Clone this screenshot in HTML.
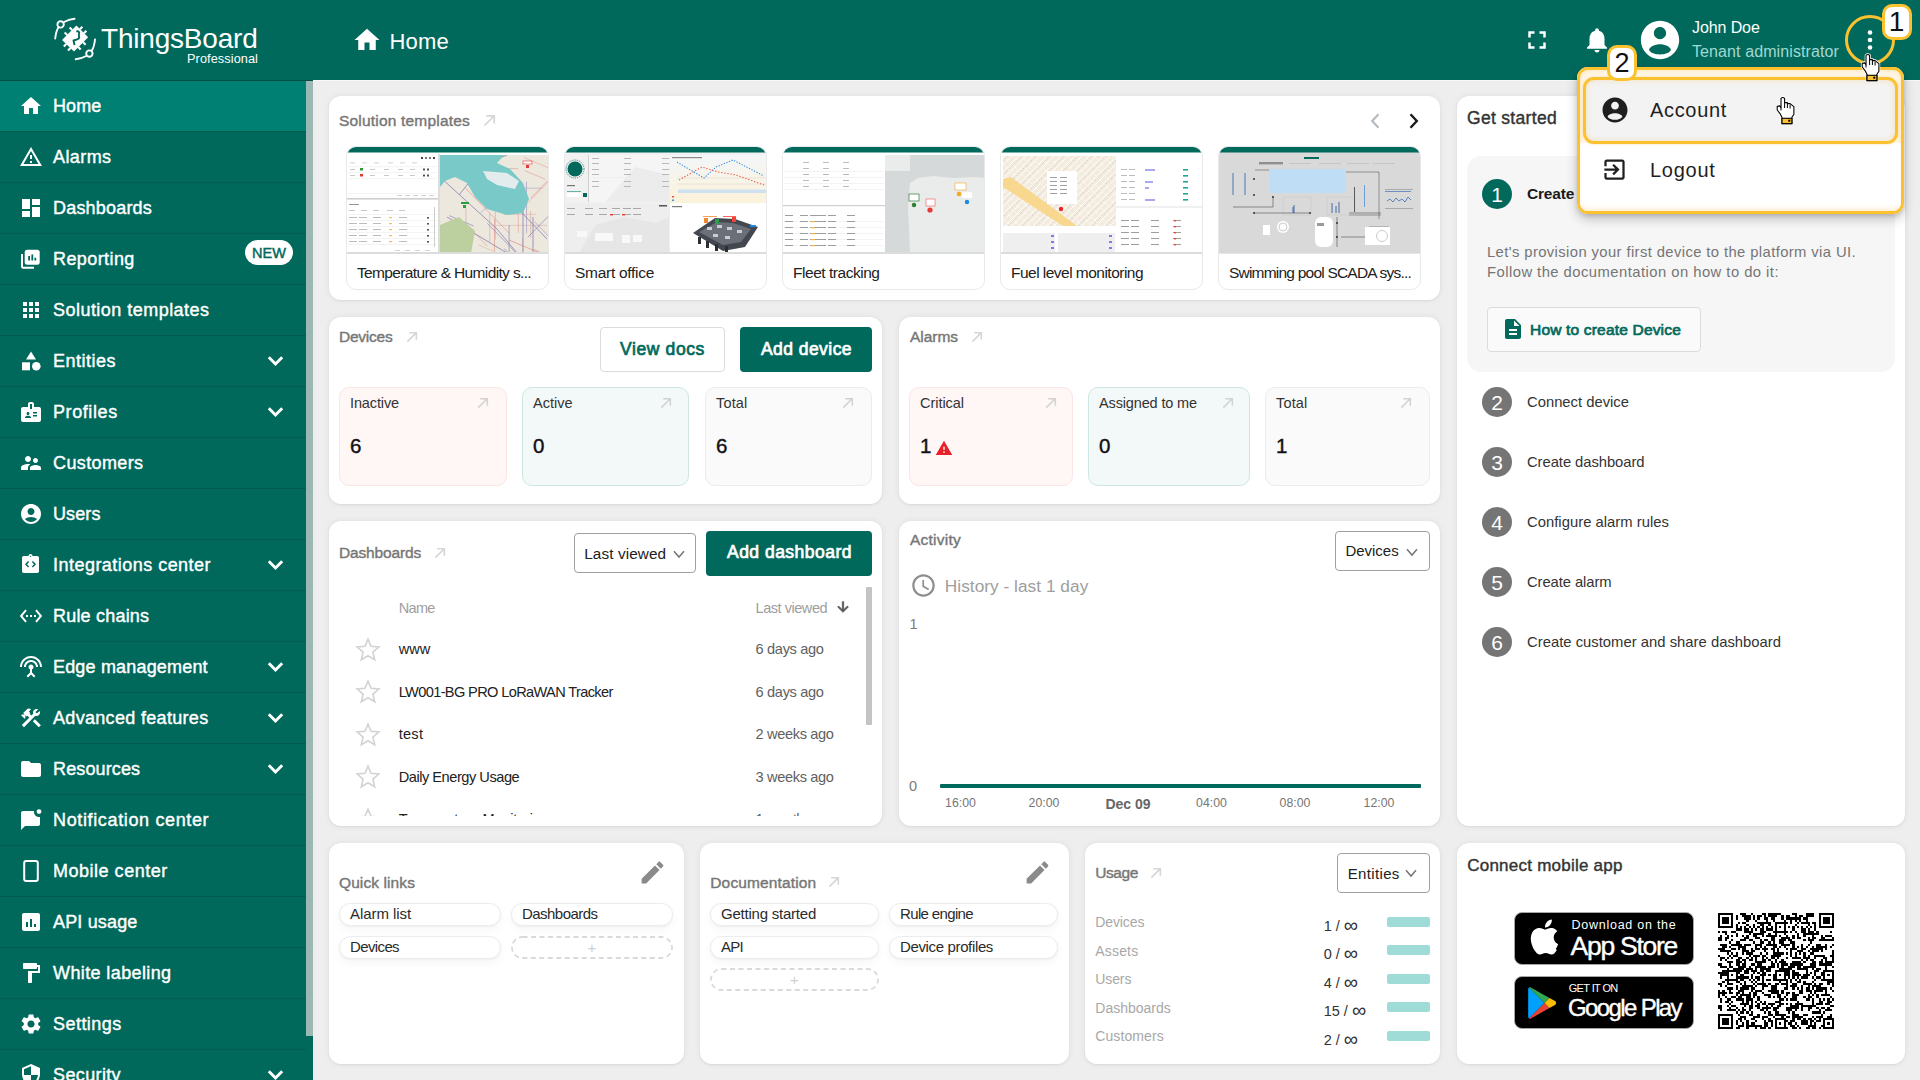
<!DOCTYPE html>
<html><head><meta charset="utf-8"><style>
*{box-sizing:border-box;margin:0;padding:0}
html,body{width:1920px;height:1080px;overflow:hidden}
body{font-family:"Liberation Sans",sans-serif;background:#eeeeee;position:relative;color:#212121}
.abs{position:absolute}
svg{display:block}
#hdr{left:0;top:0;width:1920px;height:80px;background:#00695c;z-index:5}
#side{left:0;top:80px;width:313px;height:1000px;background:#00695c;z-index:4;overflow:hidden}
.si{position:absolute;left:0;width:306px;height:51px;border-bottom:1px solid #005b50;color:#fff;font-weight:bold;font-size:17.5px}
.si .t{position:absolute;left:53px;top:15px;line-height:20px;white-space:nowrap}
.si svg.ic{position:absolute;left:19px;top:13px;width:24px;height:24px;fill:#fff}
.si svg.chev{position:absolute;left:259px;top:8px;width:32px;height:32px}
.si.act{background:#007f73}
.new{position:absolute;left:245px;top:5.5px;width:48px;height:25px;border-radius:13px;background:#fff;color:#00695c;font-size:14.5px;font-weight:normal;-webkit-text-stroke:0.45px #00695c;text-align:center;line-height:27px}
#sb{left:306px;top:0;width:7px;height:956px;background:#9bb8b5}
.card{position:absolute;background:#fff;border-radius:12px;box-shadow:0 0 6px rgba(0,0,0,.07),0 1px 2px rgba(0,0,0,.05)}
.ttl{position:absolute;font-size:15.5px;font-weight:bold;color:#6f6f6f;white-space:nowrap;line-height:18px}
.arr{position:absolute;width:14px;height:14px;fill:none;stroke:#cfcfcf;stroke-width:1.6}

.hico{position:absolute;fill:#fff}

.tpl{position:absolute;top:146px;width:203px;height:144px;border:1px solid #e9e9e9;border-radius:10px;overflow:hidden;background:#fff}
.tpl svg{position:absolute;left:0;top:0}

.btnO{position:absolute;border:1px solid #dcdcdc;border-radius:4px;background:#fff}
.btnF{position:absolute;border-radius:4px;background:#00695c}
.stat{position:absolute;border-radius:10px;border:1px solid}
.sel{position:absolute;border:1px solid #a0a0a0;border-radius:4px;background:#fff}

.chip{position:absolute;height:23px;border-radius:12px;border:1px solid #ececec;background:#fff;box-shadow:0 1px 2px rgba(0,0,0,.04),0 4px 10px rgba(0,0,0,.035)}
.chipd{position:absolute;height:23px;border-radius:12px;border:1.5px dashed #dedede;background:#fff}
.stepc{position:absolute;width:30px;height:30px;border-radius:50%;color:#fff;font-size:21px;text-align:center;line-height:31px}
.ubar{position:absolute;left:1387px;width:43px;height:10px;border-radius:2px;background:#9fdcd7}

.ybox{position:absolute;border:3px solid #fbc12e;border-radius:11px}
.badge{position:absolute;width:30px;height:36px;background:#fff;border:3px solid #fbc12e;border-radius:10px;color:#111;text-align:center}
</style></head><body>
<div id="hdr" class="abs"><svg class="abs" style="left:50px;top:14px;width:50px;height:50px" viewBox="0 0 50 50">
<g fill="none" stroke="#fff" stroke-width="1.9" stroke-linecap="round">
<path d="M5.2 24.5C5.8 19 7 15.5 8.5 13.2"/><path d="M14 8C17 6.3 20.5 5.2 24.5 4.8"/>
<circle cx="10.6" cy="10.4" r="3.2"/>
<path d="M45 25.5C44.4 31 43.3 34.5 41.7 36.8"/><path d="M36.2 42C33.2 43.7 29.7 44.8 25.7 45.2"/>
<circle cx="39.4" cy="39.6" r="3.2"/>
</g>
<g fill="none" stroke="#fff" stroke-width="2.1">
<path d="M17.2 21L14.6 18.5M22.1 16.1L19.6 13.5M29.9 15.2L32.4 12.7M33.9 19.2L36.4 16.7M33.1 28.2L35.6 30.7M28.2 33.1L30.7 35.6M20.5 34L18 36.5M16.3 30L13.8 32.5"/>
</g>
<path d="M26.4 11.6L38.2 23.2 24 37.6 12 26z" fill="#fff"/>
<path d="M26.3 17.6c2-.9 3.6.5 2.7 2.4-.7 1.4.6 2.4.1 3.9-.5 1.4-2.6 2-5.6 2.6l1 4.6" fill="none" stroke="#00695c" stroke-width="1.9" stroke-linejoin="round"/>
</svg><div class="abs" style="left:101px;top:23px;font-size:28px;color:#fff;line-height:32px;letter-spacing:-0.2px">ThingsBoard</div><div class="abs" style="left:187px;top:52px;font-size:12.7px;color:#fff;line-height:14px;letter-spacing:0.1px">Professional</div><svg class="hico" style="left:352px;top:25px;width:30px;height:30px" viewBox="0 0 24 24"><path d="M10 20v-6h4v6h5v-8h3L12 3 2 12h3v8z"/></svg><div class="abs" style="left:389.5px;top:31.38px;font-size:22px;color:#fff;line-height:1;white-space:nowrap;letter-spacing:0.203px;">Home</div><svg class="hico" style="left:1522px;top:25px;width:30px;height:30px" viewBox="0 0 24 24"><path d="M7 14H5v5h5v-2H7v-3zm-2-4h2V7h3V5H5v5zm12 7h-3v2h5v-5h-2v3zM14 5v2h3v3h2V5h-5z"/></svg><svg class="hico" style="left:1582px;top:25px;width:30px;height:30px" viewBox="0 0 24 24"><path d="M12 22c1.1 0 2-.9 2-2h-4c0 1.1.89 2 2 2zm6-6v-5c0-3.07-1.64-5.64-4.5-6.32V4c0-.83-.67-1.5-1.5-1.5s-1.5.67-1.5 1.5v.68C7.63 5.36 6 7.92 6 11v5l-2 2v1h16v-1l-2-2z"/></svg><svg class="hico" style="left:1637px;top:17px;width:46px;height:46px" viewBox="0 0 24 24"><path d="M12 2C6.48 2 2 6.48 2 12s4.48 10 10 10 10-4.48 10-10S17.52 2 12 2zm0 3.2c1.77 0 3.2 1.43 3.2 3.2S13.77 11.6 12 11.6 8.8 10.17 8.8 8.4 10.23 5.2 12 5.2zm0 14.3c-2.6 0-4.9-.8-5.7-2.3.1-1.8 3.3-3 5.7-3s5.6 1.2 5.7 3c-.8 1.5-3.1 2.3-5.7 2.3z"/></svg><div class="abs" style="left:1692px;top:19px;font-size:16px;color:#fff;line-height:18px;letter-spacing:-0.1px">John Doe</div><div class="abs" style="left:1692px;top:43px;font-size:16px;color:#a3d8cf;line-height:18px;letter-spacing:0.1px">Tenant administrator</div><svg class="hico" style="left:1860px;top:25px;width:20px;height:30px" viewBox="0 0 20 30"><circle cx="10" cy="7.5" r="2.3"/><circle cx="10" cy="15" r="2.3"/><circle cx="10" cy="22.5" r="2.3"/></svg></div>
<div id="side" class="abs">
<div class="si act" style="top:1px"><svg class="ic" viewBox="0 0 24 24"><path d="M10 20v-6h4v6h5v-8h3L12 3 2 12h3v8z"/></svg><div class="abs" style="left:53px;top:15.96px;font-size:18px;color:#fff;line-height:1;white-space:nowrap;-webkit-text-stroke:0.4px currentColor;font-weight:normal;letter-spacing:0.121px;">Home</div></div>
<div class="si" style="top:52px"><svg class="ic" viewBox="0 0 24 24"><path d="M12 5.99L19.53 19H4.47L12 5.99M12 2L1 21h22L12 2zm1 14h-2v2h2v-2zm0-6h-2v4h2v-4z"/></svg><div class="abs" style="left:53px;top:15.96px;font-size:18px;color:#fff;line-height:1;white-space:nowrap;-webkit-text-stroke:0.4px currentColor;font-weight:normal;letter-spacing:0.414px;">Alarms</div></div>
<div class="si" style="top:103px"><svg class="ic" viewBox="0 0 24 24"><path d="M3 13h8V3H3v10zm0 8h8v-6H3v6zm10 0h8V11h-8v10zm0-18v6h8V3h-8z"/></svg><div class="abs" style="left:53px;top:15.96px;font-size:18px;color:#fff;line-height:1;white-space:nowrap;-webkit-text-stroke:0.4px currentColor;font-weight:normal;letter-spacing:0.194px;">Dashboards</div></div>
<div class="si" style="top:154px"><svg class="ic" viewBox="0 0 24 24"><rect x="5.7" y="2.8" width="15" height="15" rx="2.5"/><path d="M2 7h2v12.7h11v2H4.2A2.2 2.2 0 0 1 2 19.5z"/><path d="M9.2 13.5h1.8V9H9.2zM12.4 13.5h1.8V7.5h-1.8zM15.4 13.5h1.8v-2.8h-1.8z" fill="#00695c"/></svg><div class="abs" style="left:53px;top:15.96px;font-size:18px;color:#fff;line-height:1;white-space:nowrap;-webkit-text-stroke:0.4px currentColor;font-weight:normal;letter-spacing:0.411px;">Reporting</div><span class="new">NEW</span></div>
<div class="si" style="top:205px"><svg class="ic" viewBox="0 0 24 24"><path d="M4 8h4V4H4v4zm6 12h4v-4h-4v4zm-6 0h4v-4H4v4zm0-6h4v-4H4v4zm6 0h4v-4h-4v4zm6-10v4h4V4h-4zm-6 4h4V4h-4v4zm6 6h4v-4h-4v4zm0 6h4v-4h-4v4z"/></svg><div class="abs" style="left:53px;top:15.96px;font-size:18px;color:#fff;line-height:1;white-space:nowrap;-webkit-text-stroke:0.4px currentColor;font-weight:normal;letter-spacing:0.467px;">Solution templates</div></div>
<div class="si" style="top:256px"><svg class="ic" viewBox="0 0 24 24"><path d="M12 2.5l-5 8h10z"/><circle cx="17.3" cy="17.3" r="4.3"/><rect x="3" y="13.3" width="8" height="8"/></svg><div class="abs" style="left:53px;top:15.96px;font-size:18px;color:#fff;line-height:1;white-space:nowrap;-webkit-text-stroke:0.4px currentColor;font-weight:normal;letter-spacing:0.496px;">Entities</div><svg class="chev" viewBox="259 8 32 32"><path d="M268.8 21.3L275.5 28L282.2 21.3" fill="none" stroke="#fff" stroke-width="2.9"/></svg></div>
<div class="si" style="top:307px"><svg class="ic" viewBox="0 0 24 24"><path d="M20 7h-5V4c0-1.1-.9-2-2-2h-2c-1.1 0-2 .9-2 2v3H4c-1.1 0-2 .9-2 2v11c0 1.1.9 2 2 2h16c1.1 0 2-.9 2-2V9c0-1.1-.9-2-2-2zM9 12c.83 0 1.5.67 1.5 1.5S9.83 15 9 15s-1.5-.67-1.5-1.5S8.17 12 9 12zm3 6H6v-.43c0-.6.36-1.15.92-1.39.64-.28 1.34-.43 2.08-.43s1.44.15 2.08.43c.55.24.92.78.92 1.39V18zm1-9h-2V4h2v5zm5 7.5h-4V15h4v1.5zm0-3h-4V12h4v1.5z"/></svg><div class="abs" style="left:53px;top:15.96px;font-size:18px;color:#fff;line-height:1;white-space:nowrap;-webkit-text-stroke:0.4px currentColor;font-weight:normal;letter-spacing:0.590px;">Profiles</div><svg class="chev" viewBox="259 8 32 32"><path d="M268.8 21.3L275.5 28L282.2 21.3" fill="none" stroke="#fff" stroke-width="2.9"/></svg></div>
<div class="si" style="top:358px"><svg class="ic" viewBox="0 0 24 24"><path d="M16.5 12c1.38 0 2.49-1.12 2.49-2.5S17.88 7 16.5 7C15.12 7 14 8.12 14 9.5s1.12 2.5 2.5 2.5zM9 11c1.66 0 2.99-1.34 2.99-3S10.66 5 9 5C7.34 5 6 6.34 6 8s1.34 3 3 3zm7.5 3c-1.83 0-5.5.92-5.5 2.75V19h11v-2.25c0-1.83-3.67-2.75-5.5-2.75zM9 13c-2.33 0-7 1.17-7 3.5V19h7v-2.25c0-.85.33-2.34 2.37-3.47C10.5 13.1 9.66 13 9 13z"/></svg><div class="abs" style="left:53px;top:15.96px;font-size:18px;color:#fff;line-height:1;white-space:nowrap;-webkit-text-stroke:0.4px currentColor;font-weight:normal;letter-spacing:0.385px;">Customers</div></div>
<div class="si" style="top:409px"><svg class="ic" viewBox="0 0 24 24"><path d="M12 2C6.48 2 2 6.48 2 12s4.48 10 10 10 10-4.48 10-10S17.52 2 12 2zm0 4c1.93 0 3.5 1.57 3.5 3.5S13.93 13 12 13s-3.5-1.57-3.5-3.5S10.07 6 12 6zm0 14c-2.03 0-4.43-.82-6.14-2.88C7.55 15.8 9.68 15 12 15s4.45.8 6.14 2.12C16.43 19.18 14.03 20 12 20z"/></svg><div class="abs" style="left:53px;top:15.96px;font-size:18px;color:#fff;line-height:1;white-space:nowrap;-webkit-text-stroke:0.4px currentColor;font-weight:normal;letter-spacing:0.097px;">Users</div></div>
<div class="si" style="top:460px"><svg class="ic" viewBox="0 0 24 24"><path d="M4.7 3h4.8a2 2 0 0 1 4 0h4.8A1.7 1.7 0 0 1 20 4.7v13.6A1.7 1.7 0 0 1 18.3 20H4.7A1.7 1.7 0 0 1 3 18.3V4.7A1.7 1.7 0 0 1 4.7 3z"/><circle cx="11.5" cy="3.3" r=".6" fill="#00695c"/><path d="M9.6 8.6l-2.6 2.7 2.6 2.7M13.4 8.6l2.6 2.7-2.6 2.7" fill="none" stroke="#00695c" stroke-width="1.5"/></svg><div class="abs" style="left:53px;top:15.96px;font-size:18px;color:#fff;line-height:1;white-space:nowrap;-webkit-text-stroke:0.4px currentColor;font-weight:normal;letter-spacing:0.469px;">Integrations center</div><svg class="chev" viewBox="259 8 32 32"><path d="M268.8 21.3L275.5 28L282.2 21.3" fill="none" stroke="#fff" stroke-width="2.9"/></svg></div>
<div class="si" style="top:511px"><svg class="ic" viewBox="0 0 24 24"><path d="M7.77 6.76L6.23 5.48.82 12l5.41 6.52 1.54-1.28L3.42 12l4.35-5.24zM7 13h2v-2H7v2zm10-2h-2v2h2v-2zm-6 2h2v-2h-2v2zm6.77-7.52l-1.54 1.28L20.58 12l-4.35 5.24 1.54 1.28L23.18 12l-5.41-6.52z"/></svg><div class="abs" style="left:53px;top:15.96px;font-size:18px;color:#fff;line-height:1;white-space:nowrap;-webkit-text-stroke:0.4px currentColor;font-weight:normal;letter-spacing:0.199px;">Rule chains</div></div>
<div class="si" style="top:562px"><svg class="ic" viewBox="0 0 24 24"><path d="M12 5c-3.87 0-7 3.13-7 7h2c0-2.76 2.24-5 5-5s5 2.24 5 5h2c0-3.87-3.13-7-7-7zm1 9.29c.88-.39 1.5-1.26 1.5-2.29 0-1.38-1.12-2.5-2.5-2.5S9.5 10.62 9.5 12c0 1.02.62 1.9 1.5 2.29v3.3L7.59 21 9 22.41l3-3 3 3L16.41 21 13 17.59v-3.3zM12 1C5.93 1 1 5.93 1 12h2c0-4.97 4.03-9 9-9s9 4.03 9 9h2c0-6.07-4.93-11-11-11z"/></svg><div class="abs" style="left:53px;top:15.96px;font-size:18px;color:#fff;line-height:1;white-space:nowrap;-webkit-text-stroke:0.4px currentColor;font-weight:normal;letter-spacing:0.176px;">Edge management</div><svg class="chev" viewBox="259 8 32 32"><path d="M268.8 21.3L275.5 28L282.2 21.3" fill="none" stroke="#fff" stroke-width="2.9"/></svg></div>
<div class="si" style="top:613px"><svg class="ic" viewBox="0 0 24 24"><path d="M13.78 15.3l6 6 2.11-2.16-6-6-2.11 2.16zM17.5 10c1.93 0 3.5-1.57 3.5-3.5 0-.58-.16-1.12-.41-1.6l-2.7 2.7-1.49-1.49 2.7-2.7c-.48-.25-1.02-.41-1.6-.41C15.57 3 14 4.57 14 6.5c0 .41.08.8.21 1.16l-1.85 1.85-1.78-1.78.71-.71-1.41-1.41L12 3.49c-1.17-1.17-3.07-1.17-4.24 0L4.22 7.03l1.41 1.41H2.81l-.71.71 3.54 3.54.71-.71V9.15l1.41 1.41.71-.71 1.78 1.78-7.41 7.41 2.12 2.12L16.34 9.79c.36.13.75.21 1.16.21z"/></svg><div class="abs" style="left:53px;top:15.96px;font-size:18px;color:#fff;line-height:1;white-space:nowrap;-webkit-text-stroke:0.4px currentColor;font-weight:normal;letter-spacing:0.317px;">Advanced features</div><svg class="chev" viewBox="259 8 32 32"><path d="M268.8 21.3L275.5 28L282.2 21.3" fill="none" stroke="#fff" stroke-width="2.9"/></svg></div>
<div class="si" style="top:664px"><svg class="ic" viewBox="0 0 24 24"><path d="M10 4H4c-1.1 0-1.99.9-1.99 2L2 18c0 1.1.9 2 2 2h16c1.1 0 2-.9 2-2V8c0-1.1-.9-2-2-2h-8l-2-2z"/></svg><div class="abs" style="left:53px;top:15.96px;font-size:18px;color:#fff;line-height:1;white-space:nowrap;-webkit-text-stroke:0.4px currentColor;font-weight:normal;letter-spacing:0.134px;">Resources</div><svg class="chev" viewBox="259 8 32 32"><path d="M268.8 21.3L275.5 28L282.2 21.3" fill="none" stroke="#fff" stroke-width="2.9"/></svg></div>
<div class="si" style="top:715px"><svg class="ic" viewBox="0 0 24 24"><path d="M21 7.6V16c0 1.1-.9 2-2 2H6l-4 4V5c0-1.1.9-2 2-2h11.1c-.06.32-.1.66-.1 1 0 2.76 2.24 5 5 5 .35 0 .69-.04 1-.1z"/><circle cx="20" cy="3.6" r="2.4"/></svg><div class="abs" style="left:53px;top:15.96px;font-size:18px;color:#fff;line-height:1;white-space:nowrap;-webkit-text-stroke:0.4px currentColor;font-weight:normal;letter-spacing:0.641px;">Notification center</div></div>
<div class="si" style="top:766px"><svg class="ic" viewBox="0 0 24 24"><rect x="5.2" y="2" width="13.6" height="20" rx="2" fill="none" stroke="#fff" stroke-width="2"/></svg><div class="abs" style="left:53px;top:15.96px;font-size:18px;color:#fff;line-height:1;white-space:nowrap;-webkit-text-stroke:0.4px currentColor;font-weight:normal;letter-spacing:0.514px;">Mobile center</div></div>
<div class="si" style="top:817px"><svg class="ic" viewBox="0 0 24 24"><path d="M19 3H5c-1.1 0-2 .9-2 2v14c0 1.1.9 2 2 2h14c1.1 0 2-.9 2-2V5c0-1.1-.9-2-2-2zM9 17H7v-5h2v5zm4 0h-2V9h2v8zm4 0h-2v-3h2v3z"/></svg><div class="abs" style="left:53px;top:15.96px;font-size:18px;color:#fff;line-height:1;white-space:nowrap;-webkit-text-stroke:0.4px currentColor;font-weight:normal;letter-spacing:0.160px;">API usage</div></div>
<div class="si" style="top:868px"><svg class="ic" viewBox="0 0 24 24"><path d="M18 4V3c0-.55-.45-1-1-1H5c-.55 0-1 .45-1 1v4c0 .55.45 1 1 1h12c.55 0 1-.45 1-1V6h1v4H9v11c0 .55.45 1 1 1h2c.55 0 1-.45 1-1v-9h8V4h-3z"/></svg><div class="abs" style="left:53px;top:15.96px;font-size:18px;color:#fff;line-height:1;white-space:nowrap;-webkit-text-stroke:0.4px currentColor;font-weight:normal;letter-spacing:0.388px;">White labeling</div></div>
<div class="si" style="top:919px"><svg class="ic" viewBox="0 0 24 24"><path d="M19.14 12.94c.04-.3.06-.61.06-.94 0-.32-.02-.64-.07-.94l2.03-1.58c.18-.14.23-.41.12-.61l-1.92-3.32c-.12-.22-.37-.29-.59-.22l-2.39.96c-.5-.38-1.03-.7-1.62-.94l-.36-2.54c-.04-.24-.24-.41-.48-.41h-3.84c-.24 0-.43.17-.47.41l-.36 2.54c-.59.24-1.13.57-1.62.94l-2.39-.96c-.22-.08-.47 0-.59.22L2.74 8.87c-.12.21-.08.47.12.61l2.03 1.58c-.05.3-.09.63-.09.94s.02.64.07.94l-2.03 1.58c-.18.14-.23.41-.12.61l1.92 3.32c.12.22.37.29.59.22l2.39-.96c.5.38 1.03.7 1.62.94l.36 2.54c.05.24.24.41.48.41h3.84c.24 0 .44-.17.47-.41l.36-2.54c.59-.24 1.13-.56 1.62-.94l2.39.96c.22.08.47 0 .59-.22l1.92-3.32c.12-.22.07-.47-.12-.61l-2.01-1.58zM12 15.6c-1.98 0-3.6-1.62-3.6-3.6s1.62-3.6 3.6-3.6 3.6 1.62 3.6 3.6-1.62 3.6-3.6 3.6z"/></svg><div class="abs" style="left:53px;top:15.96px;font-size:18px;color:#fff;line-height:1;white-space:nowrap;-webkit-text-stroke:0.4px currentColor;font-weight:normal;letter-spacing:0.463px;">Settings</div></div>
<div class="si" style="top:970px"><svg class="ic" viewBox="0 0 24 24"><path d="M12 1L3 5v6c0 5.55 3.84 10.74 9 12 5.16-1.26 9-6.45 9-12V5l-9-4zm0 10.99h7c-.53 4.12-3.28 7.79-7 8.94V12H5V6.3l7-3.11v8.8z"/></svg><div class="abs" style="left:53px;top:15.96px;font-size:18px;color:#fff;line-height:1;white-space:nowrap;-webkit-text-stroke:0.4px currentColor;font-weight:normal;letter-spacing:0.371px;">Security</div><svg class="chev" viewBox="259 8 32 32"><path d="M268.8 21.3L275.5 28L282.2 21.3" fill="none" stroke="#fff" stroke-width="2.9"/></svg></div>
<div id="sb" class="abs"></div>
<div class="abs" style="left:0;top:0;width:313px;height:1px;background:#004f45"></div>
</div>
<div class="abs" style="left:313px;top:80px;width:1607px;height:1px;background:#f7f7f7"></div>
<div class="card" style="left:329px;top:96px;width:1111px;height:204px"></div>
<div class="card" style="left:1457px;top:96px;width:448px;height:730px"></div>
<div class="card" style="left:329px;top:317px;width:553px;height:187px"></div>
<div class="card" style="left:899px;top:317px;width:541px;height:187px"></div>
<div class="card" style="left:329px;top:521px;width:553px;height:305px"></div>
<div class="card" style="left:899px;top:521px;width:541px;height:305px"></div>
<div class="card" style="left:329px;top:843px;width:355px;height:221px"></div>
<div class="card" style="left:700px;top:843px;width:369px;height:221px"></div>
<div class="card" style="left:1085px;top:843px;width:355px;height:221px"></div>
<div class="card" style="left:1457px;top:843px;width:448px;height:221px"></div>
<div class="abs" style="left:339px;top:113.18px;font-size:15.5px;color:#767676;line-height:1;white-space:nowrap;-webkit-text-stroke:0.4px currentColor;font-weight:normal;letter-spacing:0.193px;">Solution templates</div><svg class="abs" style="left:483px;top:114px;width:13px;height:13px" viewBox="0 0 13 13"><path d="M1.5 11.5L11 2M3.5 1.8H11.2V9.5" fill="none" stroke="#d6d6d6" stroke-width="1.7"/></svg><svg class="abs" style="left:1364px;top:109px;width:20px;height:24px" viewBox="0 0 20 24"><path d="M14.5 5.2L8.2 12l6.3 6.8" fill="none" stroke="#b4bcc3" stroke-width="2.2"/></svg><svg class="abs" style="left:1404px;top:109px;width:20px;height:24px" viewBox="0 0 20 24"><path d="M6.5 5.2L12.8 12l-6.3 6.8" fill="none" stroke="#1b1b1b" stroke-width="2.4"/></svg><div class="tpl" style="left:346px"><svg width="203" height="107" viewBox="0 0 203 107"><rect width="202" height="107" fill="#fff"/>
<rect x="0" y="0" width="203" height="5.5" fill="#00695c"/>
<rect x="1" y="19.5" width="89" height="0.6" fill="#ececec"/><rect x="1" y="25.5" width="89" height="0.6" fill="#ececec"/><rect x="1" y="31.5" width="89" height="0.6" fill="#ececec"/><rect x="1" y="46" width="89" height="0.6" fill="#ececec"/><rect x="3" y="15.5" width="5" height="0.8" fill="#c9c9c9"/><rect x="15" y="15.5" width="5" height="0.8" fill="#c9c9c9"/><rect x="27" y="15.5" width="5" height="0.8" fill="#c9c9c9"/><rect x="41" y="15.5" width="5" height="0.8" fill="#c9c9c9"/><rect x="53" y="15.5" width="5" height="0.8" fill="#c9c9c9"/><rect x="65" y="15.5" width="5" height="0.8" fill="#c9c9c9"/><rect x="3" y="22" width="5" height="0.8" fill="#bdbdbd"/><rect x="23" y="22" width="5" height="0.8" fill="#bdbdbd"/><rect x="37" y="22" width="5" height="0.8" fill="#bdbdbd"/><rect x="51" y="22" width="5" height="0.8" fill="#bdbdbd"/><rect x="63" y="22" width="5" height="0.8" fill="#bdbdbd"/><rect x="3" y="28" width="5" height="0.8" fill="#bdbdbd"/><rect x="23" y="28" width="5" height="0.8" fill="#bdbdbd"/><rect x="37" y="28" width="5" height="0.8" fill="#bdbdbd"/><rect x="51" y="28" width="5" height="0.8" fill="#bdbdbd"/><rect x="63" y="28" width="5" height="0.8" fill="#bdbdbd"/>
<rect x="74" y="10" width="2" height="2" fill="#444"/><rect x="78" y="10" width="2" height="2" fill="#777"/><rect x="82" y="10" width="2" height="2" fill="#777"/><rect x="86" y="10" width="2" height="2" fill="#444"/>
<rect x="13" y="21" width="3" height="2.5" fill="#2a9d3a"/><rect x="13" y="27" width="3" height="2.5" fill="#e53935"/>
<rect x="76" y="21.5" width="2" height="2" fill="#555"/><rect x="80" y="21.5" width="2" height="2" fill="#555"/><rect x="76" y="27.5" width="2" height="2" fill="#555"/><rect x="80" y="27.5" width="2" height="2" fill="#555"/>
<rect x="50" y="48" width="5" height="0.8" fill="#c9c9c9"/><rect x="58" y="48" width="5" height="0.8" fill="#c9c9c9"/><rect x="66" y="48" width="5" height="0.8" fill="#c9c9c9"/><rect x="74" y="48" width="5" height="0.8" fill="#c9c9c9"/><rect x="82" y="48" width="5" height="0.8" fill="#c9c9c9"/>
<rect x="0" y="51" width="92" height="1.6" fill="#cfcfcf"/>
<rect x="2" y="57" width="10" height="1" fill="#999"/><rect x="2" y="63" width="6" height="0.8" fill="#bbb"/><rect x="14" y="63" width="6" height="0.8" fill="#bbb"/><rect x="26" y="63" width="6" height="0.8" fill="#bbb"/><rect x="40" y="63" width="6" height="0.8" fill="#bbb"/><rect x="52" y="63" width="6" height="0.8" fill="#bbb"/>
<rect x="1" y="67" width="89" height="0.6" fill="#ececec"/><rect x="1" y="73" width="89" height="0.6" fill="#ececec"/><rect x="1" y="79" width="89" height="0.6" fill="#ececec"/><rect x="1" y="85" width="89" height="0.6" fill="#ececec"/><rect x="1" y="91" width="89" height="0.6" fill="#ececec"/><rect x="1" y="97" width="89" height="0.6" fill="#ececec"/><rect x="2" y="70" width="8" height="0.9" fill="#b5b5b5"/><rect x="12" y="70" width="8" height="0.9" fill="#b5b5b5"/><rect x="26" y="70" width="8" height="0.9" fill="#b5b5b5"/><rect x="52" y="70" width="8" height="0.9" fill="#b5b5b5"/><rect x="2" y="76" width="8" height="0.9" fill="#b5b5b5"/><rect x="12" y="76" width="8" height="0.9" fill="#b5b5b5"/><rect x="26" y="76" width="8" height="0.9" fill="#b5b5b5"/><rect x="52" y="76" width="8" height="0.9" fill="#b5b5b5"/><rect x="2" y="82" width="8" height="0.9" fill="#b5b5b5"/><rect x="12" y="82" width="8" height="0.9" fill="#b5b5b5"/><rect x="26" y="82" width="8" height="0.9" fill="#b5b5b5"/><rect x="52" y="82" width="8" height="0.9" fill="#b5b5b5"/><rect x="2" y="88" width="8" height="0.9" fill="#b5b5b5"/><rect x="12" y="88" width="8" height="0.9" fill="#b5b5b5"/><rect x="26" y="88" width="8" height="0.9" fill="#b5b5b5"/><rect x="52" y="88" width="8" height="0.9" fill="#b5b5b5"/><rect x="2" y="94" width="8" height="0.9" fill="#b5b5b5"/><rect x="12" y="94" width="8" height="0.9" fill="#b5b5b5"/><rect x="26" y="94" width="8" height="0.9" fill="#b5b5b5"/><rect x="52" y="94" width="8" height="0.9" fill="#b5b5b5"/>
<rect x="42" y="70" width="3" height="1.2" fill="#f6c04a"/><rect x="42" y="76" width="3" height="1.2" fill="#f6c04a"/><rect x="42" y="82" width="3" height="1.2" fill="#f6c04a"/><rect x="42" y="88" width="3" height="1.2" fill="#f6c04a"/><rect x="42" y="94" width="3" height="1.2" fill="#f6c04a"/><rect x="80" y="70" width="2" height="1.6" fill="#555"/><rect x="80" y="76" width="2" height="1.6" fill="#555"/><rect x="80" y="82" width="2" height="1.6" fill="#555"/><rect x="80" y="88" width="2" height="1.6" fill="#555"/><rect x="80" y="94" width="2" height="1.6" fill="#555"/>
<rect x="87" y="60" width="1" height="40" fill="#ccc"/><rect x="48" y="103" width="5" height="0.8" fill="#c9c9c9"/><rect x="58" y="103" width="5" height="0.8" fill="#c9c9c9"/><rect x="68" y="103" width="5" height="0.8" fill="#c9c9c9"/><rect x="78" y="103" width="5" height="0.8" fill="#c9c9c9"/>
<rect x="91" y="7" width="2" height="100" fill="#dddddd"/>
<rect x="93" y="8" width="109" height="98" fill="#ece8dd"/>
<svg x="93" y="8" width="109" height="98" viewBox="93 8 109 98" overflow="hidden"><g fill="none"><path d="M118.9 61.3L119.0 127.1" stroke="#d9b4a8" stroke-width="0.8"/><path d="M156.3 67.3L189.3 67.3" stroke="#e6a59b" stroke-width="0.5"/><path d="M201.5 54.1L241.9 71.1" stroke="#e6a59b" stroke-width="0.5"/><path d="M162.2 93.1L198.6 108.4" stroke="#e29a90" stroke-width="0.8"/><path d="M177.7 23.6L198.1 32.2" stroke="#e29a90" stroke-width="0.6"/><path d="M144.5 78.4L200.2 78.4" stroke="#d9b4a8" stroke-width="0.6"/><path d="M172.4 64.5L216.9 18.7" stroke="#e29a90" stroke-width="0.5"/><path d="M107.8 29.3L146.3 13.0" stroke="#9d8fbf" stroke-width="0.6"/><path d="M148.3 45.8L148.3 92.5" stroke="#d9b4a8" stroke-width="0.8"/><path d="M118.3 41.0L162.1 86.1" stroke="#e6a59b" stroke-width="0.8"/><path d="M186.8 102.5L231.4 121.4" stroke="#e6a59b" stroke-width="0.8"/><path d="M183.6 64.2L183.7 90.4" stroke="#d9b4a8" stroke-width="0.8"/><path d="M200.9 16.7L229.1 45.7" stroke="#e6a59b" stroke-width="0.5"/><path d="M125.0 83.3L140.5 99.3" stroke="#e29a90" stroke-width="0.6"/><path d="M171.3 40.4L171.3 85.7" stroke="#e29a90" stroke-width="0.6"/><path d="M93.8 18.6L113.7 27.0" stroke="#e6a59b" stroke-width="0.6"/><path d="M124.8 33.8L145.2 25.2" stroke="#9d8fbf" stroke-width="0.6"/><path d="M132.3 21.6L171.1 21.6" stroke="#d9b4a8" stroke-width="0.8"/><path d="M187.5 74.7L223.0 111.3" stroke="#9d8fbf" stroke-width="0.6"/><path d="M162.1 78.1L162.2 120.0" stroke="#9d8fbf" stroke-width="0.8"/><path d="M126.0 41.2L195.4 41.2" stroke="#9d8fbf" stroke-width="0.5"/><path d="M134.0 65.7L150.1 49.2" stroke="#9d8fbf" stroke-width="0.6"/><path d="M131.5 97.9L182.4 119.5" stroke="#d9b4a8" stroke-width="0.5"/><path d="M157.2 101.6L204.7 150.5" stroke="#9d8fbf" stroke-width="0.8"/><path d="M142.7 66.1L142.8 95.0" stroke="#e6a59b" stroke-width="0.6"/><path d="M175.6 90.7L175.7 125.7" stroke="#d9b4a8" stroke-width="0.5"/><path d="M177.2 10.6L227.1 31.7" stroke="#e6a59b" stroke-width="0.6"/><path d="M147.5 72.1L147.5 104.0" stroke="#e6a59b" stroke-width="0.8"/><path d="M140.4 76.4L175.3 112.3" stroke="#9d8fbf" stroke-width="0.8"/><path d="M183.9 51.0L200.6 33.8" stroke="#e6a59b" stroke-width="0.8"/><path d="M142.2 30.1L157.3 45.6" stroke="#e6a59b" stroke-width="0.6"/><path d="M180.9 90.2L225.0 44.8" stroke="#9d8fbf" stroke-width="0.8"/><path d="M102.3 68.7L126.7 79.0" stroke="#9d8fbf" stroke-width="0.8"/><path d="M179.5 34.6L179.6 86.3" stroke="#9d8fbf" stroke-width="0.6"/></g><g stroke="#8c7fb0" stroke-width="0.8" fill="none"><path d="M93 30L150 82L170 106M112 48L136 18L160 8M100 70L160 106M150 40L200 92M176 106V60M186 106V70"/></g></svg><path d="M93 8H157L150 16L163 22L176 36L182 52L176 66L160 68L140 62L128 50L120 36L108 30L98 34L93 40Z" fill="#78c9c8"/>
<path d="M136 24L160 26L172 34L168 42L150 38L140 32Z" fill="#e3ecec"/>
<path d="M93 78L112 70L128 84L124 106H93Z" fill="#bccf9f"/>
<rect x="176" y="14" width="9" height="3" fill="#fff" stroke="#e53935" stroke-width=".6"/><rect x="179" y="18" width="3" height="3" fill="#e53935"/>
<rect x="114" y="55" width="8" height="2" fill="#2a9d3a"/><rect x="116" y="58" width="3" height="3" fill="#2a9d3a"/>
<rect x="0" y="105" width="202" height="2" fill="#dcdcdc"/></svg></div><div class="abs" style="left:357px;top:265.48px;font-size:15.5px;color:#212121;line-height:1;white-space:nowrap;letter-spacing:-0.638px;">Temperature &amp; Humidity s...</div><div class="tpl" style="left:564px"><svg width="203" height="107" viewBox="0 0 203 107"><defs><linearGradient id="sky" x1="0" y1="0" x2="0" y2="1"><stop offset="0" stop-color="#f3f6f9"/><stop offset="1" stop-color="#fbf2da"/></linearGradient></defs>
<rect width="203" height="107" fill="#f1f1f1"/>
<rect x="0" y="0" width="203" height="5.5" fill="#00695c"/>
<rect x="24" y="8" width="80" height="47" fill="#f5f5f5"/>
<path d="M40 55L70 20L104 28V55Z" fill="#ececec"/>
<rect x="26" y="30.5" width="76" height="0.6" fill="#ececec"/><rect x="27" y="11" width="7" height="1" fill="#b9b9b9"/><rect x="59" y="11" width="7" height="1" fill="#b9b9b9"/><rect x="97" y="11" width="7" height="1" fill="#b9b9b9"/><rect x="27" y="16" width="7" height="1" fill="#b9b9b9"/><rect x="59" y="16" width="7" height="1" fill="#b9b9b9"/><rect x="97" y="16" width="7" height="1" fill="#b9b9b9"/><rect x="27" y="22" width="7" height="1" fill="#b9b9b9"/><rect x="59" y="22" width="7" height="1" fill="#b9b9b9"/><rect x="97" y="22" width="7" height="1" fill="#b9b9b9"/><rect x="27" y="27" width="7" height="1" fill="#b9b9b9"/><rect x="59" y="27" width="7" height="1" fill="#b9b9b9"/><rect x="97" y="27" width="7" height="1" fill="#b9b9b9"/><rect x="27" y="34" width="7" height="1" fill="#b9b9b9"/><rect x="59" y="34" width="7" height="1" fill="#b9b9b9"/><rect x="97" y="34" width="7" height="1" fill="#b9b9b9"/><rect x="27" y="39" width="7" height="1" fill="#b9b9b9"/><rect x="59" y="39" width="7" height="1" fill="#b9b9b9"/><rect x="97" y="39" width="7" height="1" fill="#b9b9b9"/>
<circle cx="10" cy="22" r="7.5" fill="#00695c"/><circle cx="10" cy="22" r="9" fill="none" stroke="#00695c" stroke-width=".9" stroke-dasharray="1 1.2"/>
<rect x="2" y="38" width="8" height="1.2" fill="#777"/><rect x="2" y="44" width="14" height="1" fill="#6ab0a8"/><rect x="2" y="46" width="14" height="4" fill="#fff"/><rect x="18" y="46" width="4" height="4" fill="#00695c"/>
<rect x="23" y="8" width="1" height="47" fill="#cfcfcf"/>
<rect x="0" y="56" width="105" height="51" fill="#eeeeee"/>
<path d="M14 107L30 78L60 70L90 76L104 70V107Z" fill="#e6e6e6"/><rect x="12" y="84" width="10" height="6" fill="#f8f8f8"/><rect x="30" y="86" width="18" height="8" fill="#f8f8f8"/><rect x="57" y="88" width="8" height="8" fill="#f8f8f8"/><rect x="68" y="88" width="9" height="7" fill="#f8f8f8"/>
<rect x="2" y="61" width="8" height="1" fill="#a9a9a9"/><rect x="20" y="61" width="8" height="1" fill="#a9a9a9"/><rect x="34" y="61" width="8" height="1" fill="#a9a9a9"/><rect x="47" y="61" width="8" height="1" fill="#a9a9a9"/><rect x="58" y="61" width="8" height="1" fill="#a9a9a9"/><rect x="68" y="61" width="8" height="1" fill="#a9a9a9"/><rect x="2" y="67" width="8" height="1" fill="#a9a9a9"/><rect x="20" y="67" width="8" height="1" fill="#a9a9a9"/><rect x="34" y="67" width="8" height="1" fill="#a9a9a9"/><rect x="47" y="67" width="8" height="1" fill="#a9a9a9"/><rect x="58" y="67" width="8" height="1" fill="#a9a9a9"/><rect x="68" y="67" width="8" height="1" fill="#a9a9a9"/><rect x="94" y="58" width="8" height="1.5" fill="#555"/>
<rect x="45" y="67" width="3" height="1.4" fill="#e53935"/><rect x="57" y="67" width="3" height="1.4" fill="#e53935"/>
<rect x="105" y="8" width="98" height="48" fill="url(#sky)"/>
<rect x="107" y="10" width="30" height="1.2" fill="#8a8a8a"/>
<g stroke="#e2d6bf" stroke-width=".5"><path d="M112 31H201M112 37H201"/></g>
<polyline points="112,15 139,31 151,20 168,13 199,29" fill="none" stroke="#3a8ee0" stroke-width="1.1" stroke-dasharray="1.3 1.5"/>
<polyline points="114,33 137,20 153,25 171,28 199,38" fill="none" stroke="#f05440" stroke-width="1.1" stroke-dasharray="1.3 1.8"/>
<rect x="113" y="42.5" width="88" height="3.5" fill="#cfe0f1"/>
<rect x="107" y="49" width="2" height="1.5" fill="#f05440"/><rect x="107" y="52.5" width="2" height="1.5" fill="#3a8ee0"/>
<rect x="105" y="56" width="98" height="51" fill="#ffffff"/><rect x="107" y="59" width="10" height="1.2" fill="#777"/>
<path d="M128 86L150 71L170 72L193 80L180 100L158 104Z" fill="#43474f"/>
<path d="M134 85L152 75L168 76L186 82L176 95L158 98Z" fill="#6b6f78"/>
<g fill="#c9ccd2"><rect x="142" y="80" width="5" height="3"/><rect x="152" y="78" width="5" height="3"/><rect x="162" y="80" width="5" height="3"/><rect x="172" y="83" width="5" height="3"/><rect x="148" y="87" width="5" height="3"/><rect x="160" y="89" width="5" height="3"/></g>
<g fill="#2b2e34"><rect x="133" y="90" width="3" height="7"/><rect x="141" y="94" width="3" height="7"/><rect x="150" y="97" width="3" height="7"/><rect x="160" y="99" width="3" height="6"/></g>
<rect x="139" y="71" width="4" height="5" fill="#f08a30"/><rect x="150" y="72" width="4" height="5" fill="#2e9d4e"/><rect x="167" y="70" width="4" height="5" fill="#f44336"/><rect x="185" y="78" width="6" height="2" fill="#1e88e5"/>
<rect x="138" y="69" width="14" height=".8" fill="#f08a30"/><rect x="158" y="69" width="13" height=".8" fill="#f44336"/>
<rect x="0" y="105" width="203" height="2" fill="#dcdcdc"/></svg></div><div class="abs" style="left:575px;top:265.48px;font-size:15.5px;color:#212121;line-height:1;white-space:nowrap;letter-spacing:-0.285px;">Smart office</div><div class="tpl" style="left:782px"><svg width="203" height="107" viewBox="0 0 203 107"><rect width="202" height="107" fill="#fff"/>
<rect x="0" y="0" width="203" height="5.5" fill="#00695c"/>
<rect x="1" y="24" width="100" height="0.6" fill="#ececec"/><rect x="1" y="30" width="100" height="0.6" fill="#ececec"/><rect x="1" y="36" width="100" height="0.6" fill="#ececec"/><rect x="1" y="42" width="100" height="0.6" fill="#ececec"/><rect x="20" y="15" width="6" height="1" fill="#bdbdbd"/><rect x="40" y="15" width="6" height="1" fill="#bdbdbd"/><rect x="60" y="15" width="6" height="1" fill="#bdbdbd"/><rect x="20" y="21" width="6" height="1" fill="#bdbdbd"/><rect x="40" y="21" width="6" height="1" fill="#bdbdbd"/><rect x="60" y="21" width="6" height="1" fill="#bdbdbd"/><rect x="20" y="27" width="6" height="1" fill="#bdbdbd"/><rect x="40" y="27" width="6" height="1" fill="#bdbdbd"/><rect x="60" y="27" width="6" height="1" fill="#bdbdbd"/><rect x="20" y="33" width="6" height="1" fill="#bdbdbd"/><rect x="40" y="33" width="6" height="1" fill="#bdbdbd"/><rect x="60" y="33" width="6" height="1" fill="#bdbdbd"/><rect x="20" y="39" width="6" height="1" fill="#bdbdbd"/><rect x="40" y="39" width="6" height="1" fill="#bdbdbd"/><rect x="60" y="39" width="6" height="1" fill="#bdbdbd"/>
<rect x="0" y="58" width="102" height="1.2" fill="#cfcfcf"/>
<rect x="1" y="74" width="99" height="0.6" fill="#ececec"/><rect x="1" y="80" width="99" height="0.6" fill="#ececec"/><rect x="1" y="86" width="99" height="0.6" fill="#ececec"/><rect x="1" y="92" width="99" height="0.6" fill="#ececec"/><rect x="1" y="98" width="99" height="0.6" fill="#ececec"/><rect x="2" y="68" width="8" height="1" fill="#9e9e9e"/><rect x="17" y="68" width="8" height="1" fill="#9e9e9e"/><rect x="27" y="68" width="8" height="1" fill="#9e9e9e"/><rect x="35" y="68" width="8" height="1" fill="#9e9e9e"/><rect x="45" y="68" width="8" height="1" fill="#9e9e9e"/><rect x="64" y="68" width="8" height="1" fill="#9e9e9e"/><rect x="2" y="74" width="8" height="1" fill="#9e9e9e"/><rect x="17" y="74" width="8" height="1" fill="#9e9e9e"/><rect x="27" y="74" width="8" height="1" fill="#9e9e9e"/><rect x="35" y="74" width="8" height="1" fill="#9e9e9e"/><rect x="45" y="74" width="8" height="1" fill="#9e9e9e"/><rect x="64" y="74" width="8" height="1" fill="#9e9e9e"/><rect x="2" y="80" width="8" height="1" fill="#9e9e9e"/><rect x="17" y="80" width="8" height="1" fill="#9e9e9e"/><rect x="27" y="80" width="8" height="1" fill="#9e9e9e"/><rect x="35" y="80" width="8" height="1" fill="#9e9e9e"/><rect x="45" y="80" width="8" height="1" fill="#9e9e9e"/><rect x="64" y="80" width="8" height="1" fill="#9e9e9e"/><rect x="2" y="86" width="8" height="1" fill="#9e9e9e"/><rect x="17" y="86" width="8" height="1" fill="#9e9e9e"/><rect x="27" y="86" width="8" height="1" fill="#9e9e9e"/><rect x="35" y="86" width="8" height="1" fill="#9e9e9e"/><rect x="45" y="86" width="8" height="1" fill="#9e9e9e"/><rect x="64" y="86" width="8" height="1" fill="#9e9e9e"/><rect x="2" y="92" width="8" height="1" fill="#9e9e9e"/><rect x="17" y="92" width="8" height="1" fill="#9e9e9e"/><rect x="27" y="92" width="8" height="1" fill="#9e9e9e"/><rect x="35" y="92" width="8" height="1" fill="#9e9e9e"/><rect x="45" y="92" width="8" height="1" fill="#9e9e9e"/><rect x="64" y="92" width="8" height="1" fill="#9e9e9e"/><rect x="2" y="98" width="8" height="1" fill="#9e9e9e"/><rect x="17" y="98" width="8" height="1" fill="#9e9e9e"/><rect x="27" y="98" width="8" height="1" fill="#9e9e9e"/><rect x="35" y="98" width="8" height="1" fill="#9e9e9e"/><rect x="45" y="98" width="8" height="1" fill="#9e9e9e"/><rect x="64" y="98" width="8" height="1" fill="#9e9e9e"/>
<rect x="28" y="74" width="4" height="1.2" fill="#f0b44a"/><rect x="28" y="80" width="4" height="1.2" fill="#f0b44a"/><rect x="28" y="86" width="4" height="1.2" fill="#f0b44a"/><rect x="28" y="92" width="4" height="1.2" fill="#f0b44a"/><rect x="28" y="98" width="4" height="1.2" fill="#f0b44a"/>
<rect x="102" y="8" width="101" height="98" fill="#eaeceb"/>
<path d="M102 24H127V8H203V31L190 30L170 31L150 29L135 31L127 36L125 60L127 106H102Z" fill="#d5d9da"/>
<rect x="126" y="47" width="10" height="7" fill="#fff" stroke="#2e7d32" stroke-width=".7"/><circle cx="131" cy="58" r="2.2" fill="#2e7d32"/>
<rect x="143" y="52" width="9" height="7" fill="#fff" stroke="#e53935" stroke-width=".5"/><circle cx="147" cy="63" r="2.6" fill="#e53935"/>
<rect x="172" y="36" width="11" height="7" fill="#fff" stroke="#f5a623" stroke-width=".6"/><circle cx="176" cy="47" r="2.3" fill="#f5a623"/>
<rect x="179" y="45" width="10" height="6" fill="#fff"/><circle cx="184" cy="55" r="2.2" fill="#1e88e5"/>
<rect x="0" y="105" width="202" height="2" fill="#dcdcdc"/></svg></div><div class="abs" style="left:793px;top:265.48px;font-size:15.5px;color:#212121;line-height:1;white-space:nowrap;letter-spacing:-0.468px;">Fleet tracking</div><div class="tpl" style="left:1000px"><svg width="203" height="107" viewBox="0 0 203 107"><rect width="202" height="107" fill="#fff"/>
<rect x="0" y="0" width="203" height="5.5" fill="#00695c"/>
<rect x="2" y="9" width="113" height="70" fill="#f3ecde"/>
<svg x="2" y="9" width="113" height="70" viewBox="2 9 113 70" overflow="hidden"><g fill="none"><path d="M-80 79L-10 9M-73 79L-3 9M-66 79L4 9M-59 79L11 9M-52 79L18 9M-45 79L25 9M-38 79L32 9M-31 79L39 9M-24 79L46 9M-17 79L53 9M-10 79L60 9M-3 79L67 9M4 79L74 9M11 79L81 9M18 79L88 9M25 79L95 9M32 79L102 9M39 79L109 9M46 79L116 9M53 79L123 9M60 79L130 9M67 79L137 9M74 79L144 9M81 79L151 9M88 79L158 9M95 79L165 9M102 79L172 9M109 79L179 9M116 79L186 9" stroke="#ffffff" stroke-width=".9"/><path d="M-60 9L10 79M-51 9L19 79M-42 9L28 79M-33 9L37 79M-24 9L46 79M-15 9L55 79M-6 9L64 79M3 9L73 79M12 9L82 79M21 9L91 79M30 9L100 79M39 9L109 79M48 9L118 79M57 9L127 79M66 9L136 79M75 9L145 79M84 9L154 79M93 9L163 79M102 9L172 79M111 9L181 79M120 9L190 79M129 9L199 79M138 9L208 79" stroke="#fbf7ee" stroke-width=".7"/><path d="M-77 79L-7 9M-63 79L7 9M-49 79L21 9M-35 79L35 9M-21 79L49 9M-7 79L63 9M7 79L77 9M21 79L91 9M35 79L105 9M49 79L119 9M63 79L133 9M77 79L147 9M91 79L161 9M105 79L175 9M119 79L189 9" stroke="#9aa2b0" stroke-width=".35" stroke-dasharray="2 1.5"/></g></svg><path d="M2 32L10 30L76 79H62L2 40Z" fill="#f8d88f"/>
<rect x="46" y="24" width="30" height="33" fill="#fff"/><rect x="49" y="30" width="7" height="1" fill="#9e9e9e"/><rect x="59" y="30" width="7" height="1" fill="#9e9e9e"/><rect x="49" y="34" width="7" height="1" fill="#9e9e9e"/><rect x="59" y="34" width="7" height="1" fill="#9e9e9e"/><rect x="49" y="38" width="7" height="1" fill="#9e9e9e"/><rect x="59" y="38" width="7" height="1" fill="#9e9e9e"/><rect x="49" y="42" width="7" height="1" fill="#9e9e9e"/><rect x="59" y="42" width="7" height="1" fill="#9e9e9e"/><rect x="49" y="46" width="7" height="1" fill="#9e9e9e"/><rect x="59" y="46" width="7" height="1" fill="#9e9e9e"/>
<circle cx="60" cy="62" r="2.2" fill="#f02525"/>
<rect x="2" y="80" width="113" height="4" fill="#fff"/>
<rect x="2" y="86" width="52" height="19" fill="#efefef"/><rect x="57" y="86" width="57" height="19" fill="#efefef"/>
<rect x="50" y="88" width="3" height="2" fill="#7c7ce8"/><rect x="50" y="94" width="3" height="2" fill="#7c7ce8"/><rect x="50" y="100" width="3" height="2" fill="#7c7ce8"/><rect x="108" y="88" width="3" height="2" fill="#7c7ce8"/><rect x="108" y="94" width="3" height="2" fill="#7c7ce8"/><rect x="108" y="100" width="3" height="2" fill="#7c7ce8"/>
<rect x="115" y="8" width="87" height="51" fill="#fff"/>
<rect x="120" y="22" width="6" height="1" fill="#bdbdbd"/><rect x="128" y="22" width="6" height="1" fill="#bdbdbd"/><rect x="120" y="28" width="6" height="1" fill="#bdbdbd"/><rect x="128" y="28" width="6" height="1" fill="#bdbdbd"/><rect x="120" y="34" width="6" height="1" fill="#bdbdbd"/><rect x="128" y="34" width="6" height="1" fill="#bdbdbd"/><rect x="120" y="40" width="6" height="1" fill="#bdbdbd"/><rect x="128" y="40" width="6" height="1" fill="#bdbdbd"/><rect x="120" y="46" width="6" height="1" fill="#bdbdbd"/><rect x="128" y="46" width="6" height="1" fill="#bdbdbd"/><rect x="120" y="52" width="6" height="1" fill="#bdbdbd"/><rect x="128" y="52" width="6" height="1" fill="#bdbdbd"/>
<rect x="144" y="22" width="10" height="2" fill="#a9a9f0"/><rect x="144" y="34" width="8" height="2" fill="#a9a9f0"/><rect x="144" y="40" width="4" height="2" fill="#a9a9f0"/><rect x="144" y="52" width="10" height="2" fill="#a9a9f0"/>
<rect x="182" y="22" width="5" height="1.6" fill="#26a69a"/><rect x="182" y="28" width="5" height="1.6" fill="#26a69a"/><rect x="182" y="34" width="5" height="1.6" fill="#26a69a"/><rect x="182" y="40" width="5" height="1.6" fill="#26a69a"/><rect x="182" y="46" width="5" height="1.6" fill="#26a69a"/><rect x="182" y="52" width="5" height="1.6" fill="#26a69a"/>
<rect x="115" y="59" width="87" height="2" fill="#f0f0f0"/>
<rect x="120" y="73" width="8" height="1" fill="#9e9e9e"/><rect x="130" y="73" width="8" height="1" fill="#9e9e9e"/><rect x="150" y="73" width="8" height="1" fill="#9e9e9e"/><rect x="172" y="73" width="8" height="1" fill="#9e9e9e"/><rect x="120" y="79" width="8" height="1" fill="#9e9e9e"/><rect x="130" y="79" width="8" height="1" fill="#9e9e9e"/><rect x="150" y="79" width="8" height="1" fill="#9e9e9e"/><rect x="172" y="79" width="8" height="1" fill="#9e9e9e"/><rect x="120" y="85" width="8" height="1" fill="#9e9e9e"/><rect x="130" y="85" width="8" height="1" fill="#9e9e9e"/><rect x="150" y="85" width="8" height="1" fill="#9e9e9e"/><rect x="172" y="85" width="8" height="1" fill="#9e9e9e"/><rect x="120" y="91" width="8" height="1" fill="#9e9e9e"/><rect x="130" y="91" width="8" height="1" fill="#9e9e9e"/><rect x="150" y="91" width="8" height="1" fill="#9e9e9e"/><rect x="172" y="91" width="8" height="1" fill="#9e9e9e"/><rect x="120" y="97" width="8" height="1" fill="#9e9e9e"/><rect x="130" y="97" width="8" height="1" fill="#9e9e9e"/><rect x="150" y="97" width="8" height="1" fill="#9e9e9e"/><rect x="172" y="97" width="8" height="1" fill="#9e9e9e"/><rect x="173" y="73" width="2" height="1.4" fill="#f44336"/><rect x="173" y="79" width="2" height="1.4" fill="#f44336"/><rect x="173" y="85" width="2" height="1.4" fill="#f44336"/><rect x="173" y="91" width="2" height="1.4" fill="#f44336"/><rect x="173" y="97" width="2" height="1.4" fill="#f44336"/>
<rect x="0" y="105" width="202" height="2" fill="#dcdcdc"/></svg></div><div class="abs" style="left:1011px;top:265.48px;font-size:15.5px;color:#212121;line-height:1;white-space:nowrap;letter-spacing:-0.525px;">Fuel level monitoring</div><div class="tpl" style="left:1218px"><svg width="203" height="107" viewBox="0 0 203 107"><rect width="202" height="107" fill="#d9d9d9"/>
<rect x="0" y="0" width="203" height="5.5" fill="#00695c"/>
<rect x="85" y="10" width="15" height="2" fill="#00695c"/>
<rect x="40" y="15" width="24" height="2.4" fill="#8f8f8f"/><rect x="70" y="16" width="22" height="0.6" fill="#b8b8b8"/><rect x="100" y="16" width="22" height="0.6" fill="#b8b8b8"/><rect x="128" y="16" width="22" height="0.6" fill="#b8b8b8"/><rect x="154" y="16" width="22" height="0.6" fill="#b8b8b8"/>
<rect x="50" y="22" width="76" height="24" fill="#bfddf4"/>
<g stroke="#5a5a5a" stroke-width=".6" fill="none"><path d="M36 23H50M127 25H160V72M14 26V48M26 26V48M130 68H162M150 80H170"/></g>
<rect x="64" y="50" width="28" height="18" fill="none" stroke="#c6c6c6" stroke-width=".5"/><rect x="108" y="50" width="28" height="18" fill="none" stroke="#c6c6c6" stroke-width=".5"/>
<rect x="96" y="70" width="18" height="30" rx="6" fill="#fff"/><rect x="98" y="76" width="7" height="3" fill="#9a9a9a"/>
<circle cx="64" cy="80" r="6" fill="#fff"/><rect x="44" y="78" width="7" height="10" fill="#fff"/>
<rect x="146" y="80" width="25" height="18" fill="#fff"/><circle cx="163" cy="89" r="5.5" fill="none" stroke="#aaa" stroke-width=".6"/>
<rect x="135" y="40" width="1" height="25" fill="#5a5a5a"/>
<rect x="166" y="44" width="26" height="1" fill="#6a8fc0"/><rect x="166" y="42" width="28" height="1" fill="#aaa"/><rect x="166" y="61" width="28" height="1" fill="#aaa"/>
<rect x="13.5" y="26" width="1" height="22" fill="#6a9fd8"/><rect x="25.5" y="26" width="1" height="22" fill="#6a9fd8"/>
<g fill="#222"><circle cx="35" cy="32" r=".9"/><circle cx="35" cy="48" r=".9"/><circle cx="54" cy="50" r=".9"/><circle cx="35" cy="66" r=".9"/><circle cx="91" cy="66" r=".9"/><circle cx="118" cy="76" r=".9"/><circle cx="118" cy="90" r=".9"/></g>
<g stroke="#333" stroke-width=".5" fill="none"><path d="M14 60H54M54 50V60M35 66H90M118 70V100M122 90H146M130 66H162"/></g>
<path d="M74 66V60M75 66V58" stroke="#1f4fa0" stroke-width=".8"/><path d="M113 66V56M117 66V59M120 66V55" stroke="#1f4fa0" stroke-width=".8"/>
<polyline points="168,54 171,52 174,55 177,51 180,54 183,52 186,55 189,50 192,53" fill="none" stroke="#2a5fae" stroke-width=".7"/>
<rect x="145" y="38" width="1" height="22" fill="#6a9fd8"/><rect x="60" y="76" width="8" height="8" rx="4" fill="none" stroke="#999" stroke-width=".5"/>
<rect x="0" y="106" width="202" height="1" fill="#e6e6e6"/></svg></div><div class="abs" style="left:1229px;top:265.48px;font-size:15.5px;color:#212121;line-height:1;white-space:nowrap;letter-spacing:-0.786px;">Swimming pool SCADA sys...</div>
<div class="abs" style="left:339px;top:328.88px;font-size:15.5px;color:#767676;line-height:1;white-space:nowrap;-webkit-text-stroke:0.4px currentColor;font-weight:normal;letter-spacing:-0.249px;">Devices</div><svg class="abs" style="left:406px;top:331px;width:12px;height:12px" viewBox="0 0 13 13"><path d="M1.5 11.5L11 2M3.5 1.8H11.2V9.5" fill="none" stroke="#d6d6d6" stroke-width="1.7"/></svg><div class="btnO" style="left:600px;top:327px;width:125px;height:45px"></div><div class="abs" style="left:620px;top:340.69px;font-size:17.5px;color:#00695c;line-height:1;white-space:nowrap;-webkit-text-stroke:0.7px currentColor;font-weight:normal;letter-spacing:0.616px;">View docs</div><div class="btnF" style="left:740px;top:327px;width:132px;height:45px"></div><div class="abs" style="left:761px;top:340.69px;font-size:17.5px;color:#ffffff;line-height:1;white-space:nowrap;-webkit-text-stroke:0.7px currentColor;font-weight:normal;letter-spacing:0.441px;">Add device</div><div class="stat" style="left:339px;top:387px;width:168px;height:99px;background:#fff6f6;border-color:#fbe5e5"></div><div class="abs" style="left:350px;top:395.73px;font-size:14.5px;color:#333333;line-height:1;white-space:nowrap;letter-spacing:-0.123px;">Inactive</div><div class="abs" style="left:350px;top:435.65px;font-size:20.5px;color:#111111;line-height:1;white-space:nowrap;-webkit-text-stroke:0.4px currentColor;font-weight:normal;">6</div><svg class="abs" style="left:477px;top:397px;width:12px;height:12px" viewBox="0 0 13 13"><path d="M1.5 11.5L11 2M3.5 1.8H11.2V9.5" fill="none" stroke="#d2d2d2" stroke-width="1.6"/></svg><div class="stat" style="left:522px;top:387px;width:167px;height:99px;background:#f3f8f8;border-color:#cfe6e3"></div><div class="abs" style="left:533px;top:395.73px;font-size:14.5px;color:#333333;line-height:1;white-space:nowrap;letter-spacing:0.000px;">Active</div><div class="abs" style="left:533px;top:435.65px;font-size:20.5px;color:#111111;line-height:1;white-space:nowrap;-webkit-text-stroke:0.4px currentColor;font-weight:normal;">0</div><svg class="abs" style="left:660px;top:397px;width:12px;height:12px" viewBox="0 0 13 13"><path d="M1.5 11.5L11 2M3.5 1.8H11.2V9.5" fill="none" stroke="#d2d2d2" stroke-width="1.6"/></svg><div class="stat" style="left:705px;top:387px;width:167px;height:99px;background:#fafafa;border-color:#ececec"></div><div class="abs" style="left:716px;top:395.73px;font-size:14.5px;color:#333333;line-height:1;white-space:nowrap;letter-spacing:0.172px;">Total</div><div class="abs" style="left:716px;top:435.65px;font-size:20.5px;color:#111111;line-height:1;white-space:nowrap;-webkit-text-stroke:0.4px currentColor;font-weight:normal;">6</div><svg class="abs" style="left:842px;top:397px;width:12px;height:12px" viewBox="0 0 13 13"><path d="M1.5 11.5L11 2M3.5 1.8H11.2V9.5" fill="none" stroke="#d2d2d2" stroke-width="1.6"/></svg><div class="abs" style="left:910px;top:328.88px;font-size:15.5px;color:#767676;line-height:1;white-space:nowrap;-webkit-text-stroke:0.4px currentColor;font-weight:normal;letter-spacing:-0.039px;">Alarms</div><svg class="abs" style="left:971px;top:331px;width:12px;height:12px" viewBox="0 0 13 13"><path d="M1.5 11.5L11 2M3.5 1.8H11.2V9.5" fill="none" stroke="#d6d6d6" stroke-width="1.7"/></svg><div class="stat" style="left:909px;top:387px;width:164px;height:99px;background:#fff6f6;border-color:#fbe5e5"></div><div class="abs" style="left:920px;top:395.73px;font-size:14.5px;color:#333333;line-height:1;white-space:nowrap;letter-spacing:-0.039px;">Critical</div><div class="abs" style="left:920px;top:435.65px;font-size:20.5px;color:#111111;line-height:1;white-space:nowrap;-webkit-text-stroke:0.4px currentColor;font-weight:normal;">1</div><svg class="abs" style="left:1045px;top:397px;width:12px;height:12px" viewBox="0 0 13 13"><path d="M1.5 11.5L11 2M3.5 1.8H11.2V9.5" fill="none" stroke="#d2d2d2" stroke-width="1.6"/></svg><svg class="abs" style="left:935px;top:439px;width:18px;height:16px" viewBox="0 0 24 21"><path d="M1 21h22L12 2 1 21zm12-3h-2v-2h2v2zm0-4h-2v-4h2v4z" fill="#e8202a"/></svg><div class="stat" style="left:1088px;top:387px;width:162px;height:99px;background:#f3f8f8;border-color:#cfe6e3"></div><div class="abs" style="left:1099px;top:395.73px;font-size:14.5px;color:#333333;line-height:1;white-space:nowrap;letter-spacing:-0.140px;">Assigned to me</div><div class="abs" style="left:1099px;top:435.65px;font-size:20.5px;color:#111111;line-height:1;white-space:nowrap;-webkit-text-stroke:0.4px currentColor;font-weight:normal;">0</div><svg class="abs" style="left:1222px;top:397px;width:12px;height:12px" viewBox="0 0 13 13"><path d="M1.5 11.5L11 2M3.5 1.8H11.2V9.5" fill="none" stroke="#d2d2d2" stroke-width="1.6"/></svg><div class="stat" style="left:1265px;top:387px;width:165px;height:99px;background:#fafafa;border-color:#ececec"></div><div class="abs" style="left:1276px;top:395.73px;font-size:14.5px;color:#333333;line-height:1;white-space:nowrap;letter-spacing:0.172px;">Total</div><div class="abs" style="left:1276px;top:435.65px;font-size:20.5px;color:#111111;line-height:1;white-space:nowrap;-webkit-text-stroke:0.4px currentColor;font-weight:normal;">1</div><svg class="abs" style="left:1400px;top:397px;width:12px;height:12px" viewBox="0 0 13 13"><path d="M1.5 11.5L11 2M3.5 1.8H11.2V9.5" fill="none" stroke="#d2d2d2" stroke-width="1.6"/></svg><div class="abs" style="left:339px;top:544.88px;font-size:15.5px;color:#767676;line-height:1;white-space:nowrap;-webkit-text-stroke:0.4px currentColor;font-weight:normal;letter-spacing:-0.158px;">Dashboards</div><svg class="abs" style="left:434px;top:547px;width:12px;height:12px" viewBox="0 0 13 13"><path d="M1.5 11.5L11 2M3.5 1.8H11.2V9.5" fill="none" stroke="#d6d6d6" stroke-width="1.7"/></svg><div class="sel" style="left:574px;top:533px;width:122px;height:40px"></div><div class="abs" style="left:584.2px;top:545.55px;font-size:15.3px;color:#212121;line-height:1;white-space:nowrap;letter-spacing:0.111px;">Last viewed</div><svg class="abs" style="left:673px;top:550px;width:12px;height:9px" viewBox="0 0 12 9"><path d="M1 1.2L6.0 7L11 1.2" fill="none" stroke="#757575" stroke-width="1.5"/></svg><div class="btnF" style="left:706px;top:531px;width:166px;height:45px"></div><div class="abs" style="left:727px;top:544.19px;font-size:17.5px;color:#ffffff;line-height:1;white-space:nowrap;-webkit-text-stroke:0.7px currentColor;font-weight:normal;letter-spacing:0.483px;">Add dashboard</div><div class="abs" style="left:398.7px;top:601.03px;font-size:14.5px;color:#9e9e9e;line-height:1;white-space:nowrap;letter-spacing:-0.672px;">Name</div><div class="abs" style="left:755.6px;top:601.03px;font-size:14.5px;color:#9e9e9e;line-height:1;white-space:nowrap;letter-spacing:-0.462px;">Last viewed</div><svg class="abs" style="left:835px;top:599px;width:16px;height:16px" viewBox="0 0 24 24"><path d="M20 12l-1.41-1.41L13 16.17V4h-2v12.17l-5.58-5.59L4 12l8 8 8-8z" fill="#555" stroke="#555" stroke-width="1.2"/></svg><div class="abs" style="left:329px;top:580px;width:536px;height:236px;overflow:hidden"><svg class="abs" style="left:26px;top:56.6px;width:26px;height:26px" viewBox="0 0 24 24"><path d="M12 17.27L18.18 21l-1.64-7.03L22 9.24l-7.19-.61L12 2 9.19 8.63 2 9.24l5.46 4.73L5.82 21z" fill="none" stroke="#d3d3d3" stroke-width="1.5"/></svg><div class="abs" style="left:69.7px;top:62.24px;font-size:14.6px;color:#212121;line-height:1;white-space:nowrap;letter-spacing:-0.042px;">www</div><div class="abs" style="left:426.6px;top:62.24px;font-size:14.6px;color:#616161;line-height:1;white-space:nowrap;letter-spacing:-0.341px;">6 days ago</div><svg class="abs" style="left:26px;top:99.1px;width:26px;height:26px" viewBox="0 0 24 24"><path d="M12 17.27L18.18 21l-1.64-7.03L22 9.24l-7.19-.61L12 2 9.19 8.63 2 9.24l5.46 4.73L5.82 21z" fill="none" stroke="#d3d3d3" stroke-width="1.5"/></svg><div class="abs" style="left:69.7px;top:104.74px;font-size:14.6px;color:#212121;line-height:1;white-space:nowrap;letter-spacing:-0.641px;">LW001-BG PRO LoRaWAN Tracker</div><div class="abs" style="left:426.6px;top:104.74px;font-size:14.6px;color:#616161;line-height:1;white-space:nowrap;letter-spacing:-0.341px;">6 days ago</div><svg class="abs" style="left:26px;top:141.6px;width:26px;height:26px" viewBox="0 0 24 24"><path d="M12 17.27L18.18 21l-1.64-7.03L22 9.24l-7.19-.61L12 2 9.19 8.63 2 9.24l5.46 4.73L5.82 21z" fill="none" stroke="#d3d3d3" stroke-width="1.5"/></svg><div class="abs" style="left:69.7px;top:147.24px;font-size:14.6px;color:#212121;line-height:1;white-space:nowrap;letter-spacing:0.242px;">test</div><div class="abs" style="left:426.6px;top:147.24px;font-size:14.6px;color:#616161;line-height:1;white-space:nowrap;letter-spacing:-0.359px;">2 weeks ago</div><svg class="abs" style="left:26px;top:184.1px;width:26px;height:26px" viewBox="0 0 24 24"><path d="M12 17.27L18.18 21l-1.64-7.03L22 9.24l-7.19-.61L12 2 9.19 8.63 2 9.24l5.46 4.73L5.82 21z" fill="none" stroke="#d3d3d3" stroke-width="1.5"/></svg><div class="abs" style="left:69.7px;top:189.74px;font-size:14.6px;color:#212121;line-height:1;white-space:nowrap;letter-spacing:-0.471px;">Daily Energy Usage</div><div class="abs" style="left:426.6px;top:189.74px;font-size:14.6px;color:#616161;line-height:1;white-space:nowrap;letter-spacing:-0.359px;">3 weeks ago</div><svg class="abs" style="left:26px;top:226.6px;width:26px;height:26px" viewBox="0 0 24 24"><path d="M12 17.27L18.18 21l-1.64-7.03L22 9.24l-7.19-.61L12 2 9.19 8.63 2 9.24l5.46 4.73L5.82 21z" fill="none" stroke="#d3d3d3" stroke-width="1.5"/></svg><div class="abs" style="left:69.7px;top:232.24px;font-size:14.6px;color:#212121;line-height:1;white-space:nowrap;letter-spacing:-0.188px;">Temperature Monitoring</div><div class="abs" style="left:426.6px;top:232.24px;font-size:14.6px;color:#616161;line-height:1;white-space:nowrap;letter-spacing:-0.649px;">1 month ago</div></div><div class="abs" style="left:866px;top:587px;width:6px;height:138px;background:#c4c4c4;border-radius:1px"></div><div class="abs" style="left:910px;top:532.48px;font-size:15.5px;color:#767676;line-height:1;white-space:nowrap;-webkit-text-stroke:0.4px currentColor;font-weight:normal;letter-spacing:0.238px;">Activity</div><div class="sel" style="left:1335px;top:531px;width:95px;height:40px"></div><div class="abs" style="left:1345.4px;top:543.10px;font-size:15px;color:#212121;line-height:1;white-space:nowrap;letter-spacing:-0.008px;">Devices</div><svg class="abs" style="left:1406px;top:548px;width:12px;height:9px" viewBox="0 0 12 9"><path d="M1 1.2L6.0 7L11 1.2" fill="none" stroke="#757575" stroke-width="1.5"/></svg><svg class="abs" style="left:910px;top:572px;width:27px;height:27px" viewBox="0 0 24 24"><path d="M11.99 2C6.47 2 2 6.48 2 12s4.47 10 9.99 10C17.52 22 22 17.52 22 12S17.52 2 11.99 2zM12 20c-4.42 0-8-3.58-8-8s3.58-8 8-8 8 3.58 8 8-3.58 8-8 8zm.5-13H11v6l5.25 3.15.75-1.23-4.5-2.67z" fill="#8e8e8e"/></svg><div class="abs" style="left:944.8px;top:578.36px;font-size:17.3px;color:#9e9e9e;line-height:1;white-space:nowrap;letter-spacing:0.020px;">History - last 1 day</div><div class="abs" style="left:909.5px;top:616.53px;font-size:14.5px;color:#7a7a7a;line-height:1;white-space:nowrap;">1</div><div class="abs" style="left:909px;top:779.03px;font-size:14.5px;color:#7a7a7a;line-height:1;white-space:nowrap;">0</div><div class="abs" style="left:940px;top:784px;width:481px;height:4px;background:#00695c;border-radius:1px"></div><div class="abs" style="left:760.5px;width:400px;text-align:center;top:796.59px;font-size:12.3px;color:#757575;line-height:1;white-space:nowrap;">16:00</div><div class="abs" style="left:844px;width:400px;text-align:center;top:796.59px;font-size:12.3px;color:#757575;line-height:1;white-space:nowrap;">20:00</div><div class="abs" style="left:1011.5px;width:400px;text-align:center;top:796.59px;font-size:12.3px;color:#757575;line-height:1;white-space:nowrap;">04:00</div><div class="abs" style="left:1095px;width:400px;text-align:center;top:796.59px;font-size:12.3px;color:#757575;line-height:1;white-space:nowrap;">08:00</div><div class="abs" style="left:1179px;width:400px;text-align:center;top:796.59px;font-size:12.3px;color:#757575;line-height:1;white-space:nowrap;">12:00</div><div class="abs" style="left:928px;width:400px;text-align:center;top:796.65px;font-size:14px;color:#666666;line-height:1;white-space:nowrap;font-weight:bold;">Dec 09</div>
<div class="abs" style="left:1467px;top:109.69px;font-size:17.5px;color:#333333;line-height:1;white-space:nowrap;-webkit-text-stroke:0.4px currentColor;font-weight:normal;letter-spacing:0.311px;">Get started</div><div class="abs" style="left:1467px;top:156px;width:428px;height:216px;background:#f6f6f6;border-radius:14px"></div><div class="stepc" style="left:1482px;top:179px;background:#00695c">1</div><div class="abs" style="left:1527px;top:185.78px;font-size:15.5px;color:#1a1a1a;line-height:1;white-space:nowrap;font-weight:bold;letter-spacing:-0.2px;">Create device</div><div class="abs" style="left:1487px;top:245.27px;font-size:14.8px;color:#757575;line-height:1;white-space:nowrap;letter-spacing:0.393px;">Let's provision your first device to the platform via UI.</div><div class="abs" style="left:1487px;top:265.47px;font-size:14.8px;color:#757575;line-height:1;white-space:nowrap;letter-spacing:0.461px;">Follow the documentation on how to do it:</div><div class="abs" style="left:1487px;top:307px;width:214px;height:45px;border:1px solid #dcdcdc;border-radius:4px;background:#fafafa"></div><svg class="abs" style="left:1501px;top:317px;width:24px;height:24px" viewBox="0 0 24 24"><path d="M14 2H6c-1.1 0-1.99.9-1.99 2L4 20c0 1.1.89 2 1.99 2H18c1.1 0 2-.9 2-2V8l-6-6zm2 16H8v-2h8v2zm0-4H8v-2h8v2zm-3-5V3.5L18.5 9H13z" fill="#00695c"/></svg><div class="abs" style="left:1530px;top:322.38px;font-size:15.5px;color:#00695c;line-height:1;white-space:nowrap;-webkit-text-stroke:0.7px currentColor;font-weight:normal;letter-spacing:0.184px;">How to create Device</div><div class="stepc" style="left:1482px;top:387px;background:#757575">2</div><div class="abs" style="left:1527px;top:394.97px;font-size:14.8px;color:#333333;line-height:1;white-space:nowrap;letter-spacing:0.000px;">Connect device</div><div class="stepc" style="left:1482px;top:447px;background:#757575">3</div><div class="abs" style="left:1527px;top:454.97px;font-size:14.8px;color:#333333;line-height:1;white-space:nowrap;letter-spacing:-0.061px;">Create dashboard</div><div class="stepc" style="left:1482px;top:507px;background:#757575">4</div><div class="abs" style="left:1527px;top:514.97px;font-size:14.8px;color:#333333;line-height:1;white-space:nowrap;letter-spacing:0.026px;">Configure alarm rules</div><div class="stepc" style="left:1482px;top:567px;background:#757575">5</div><div class="abs" style="left:1527px;top:574.97px;font-size:14.8px;color:#333333;line-height:1;white-space:nowrap;letter-spacing:-0.086px;">Create alarm</div><div class="stepc" style="left:1482px;top:627px;background:#757575">6</div><div class="abs" style="left:1527px;top:634.97px;font-size:14.8px;color:#333333;line-height:1;white-space:nowrap;letter-spacing:0.019px;">Create customer and share dashboard</div><div class="abs" style="left:339px;top:874.88px;font-size:15.5px;color:#767676;line-height:1;white-space:nowrap;-webkit-text-stroke:0.4px currentColor;font-weight:normal;letter-spacing:0.097px;">Quick links</div><svg class="abs" style="left:638px;top:858px;width:29px;height:29px" viewBox="0 0 24 24"><path d="M3 17.25V21h3.75L17.81 9.94l-3.75-3.75L3 17.25zM20.71 7.04c.39-.39.39-1.02 0-1.41l-2.34-2.34c-.39-.39-1.02-.39-1.41 0l-1.83 1.83 3.75 3.75 1.83-1.83z" fill="#8a8a8a"/></svg><div class="chip" style="left:339px;top:903px;width:162px"></div><div class="abs" style="left:350px;top:905.90px;font-size:15px;color:#2a2a2a;line-height:1;white-space:nowrap;letter-spacing:-0.067px;">Alarm list</div><div class="chip" style="left:511px;top:903px;width:162px"></div><div class="abs" style="left:522px;top:905.90px;font-size:15px;color:#2a2a2a;line-height:1;white-space:nowrap;letter-spacing:-0.539px;">Dashboards</div><div class="chip" style="left:339px;top:936px;width:162px"></div><div class="abs" style="left:350px;top:938.90px;font-size:15px;color:#2a2a2a;line-height:1;white-space:nowrap;letter-spacing:-0.623px;">Devices</div><svg class="abs" style="left:511px;top:936px;width:162px;height:23px" viewBox="0 0 162 23"><rect x="1" y="1" width="160" height="21" rx="10.5" fill="#fff" stroke="#dadada" stroke-width="1.8" stroke-dasharray="5 3.5"/></svg><div class="abs" style="left:392.0px;width:400px;text-align:center;top:939.80px;font-size:15px;color:#cfcfcf;line-height:1;white-space:nowrap;">+</div><div class="abs" style="left:710.3px;top:874.88px;font-size:15.5px;color:#767676;line-height:1;white-space:nowrap;-webkit-text-stroke:0.4px currentColor;font-weight:normal;letter-spacing:0.133px;">Documentation</div><svg class="abs" style="left:828px;top:876px;width:12px;height:12px" viewBox="0 0 13 13"><path d="M1.5 11.5L11 2M3.5 1.8H11.2V9.5" fill="none" stroke="#d6d6d6" stroke-width="1.7"/></svg><svg class="abs" style="left:1023px;top:858px;width:29px;height:29px" viewBox="0 0 24 24"><path d="M3 17.25V21h3.75L17.81 9.94l-3.75-3.75L3 17.25zM20.71 7.04c.39-.39.39-1.02 0-1.41l-2.34-2.34c-.39-.39-1.02-.39-1.41 0l-1.83 1.83 3.75 3.75 1.83-1.83z" fill="#8a8a8a"/></svg><div class="chip" style="left:710px;top:903px;width:169px"></div><div class="abs" style="left:721px;top:905.90px;font-size:15px;color:#2a2a2a;line-height:1;white-space:nowrap;letter-spacing:-0.226px;">Getting started</div><div class="chip" style="left:889px;top:903px;width:169px"></div><div class="abs" style="left:900px;top:905.90px;font-size:15px;color:#2a2a2a;line-height:1;white-space:nowrap;letter-spacing:-0.642px;">Rule engine</div><div class="chip" style="left:710px;top:936px;width:169px"></div><div class="abs" style="left:721px;top:938.90px;font-size:15px;color:#2a2a2a;line-height:1;white-space:nowrap;letter-spacing:-0.729px;">API</div><div class="chip" style="left:889px;top:936px;width:169px"></div><div class="abs" style="left:900px;top:938.90px;font-size:15px;color:#2a2a2a;line-height:1;white-space:nowrap;letter-spacing:-0.358px;">Device profiles</div><svg class="abs" style="left:710px;top:968px;width:169px;height:23px" viewBox="0 0 169 23"><rect x="1" y="1" width="167" height="21" rx="10.5" fill="#fff" stroke="#dadada" stroke-width="1.8" stroke-dasharray="5 3.5"/></svg><div class="abs" style="left:594.5px;width:400px;text-align:center;top:971.80px;font-size:15px;color:#cfcfcf;line-height:1;white-space:nowrap;">+</div><div class="abs" style="left:1095.3px;top:865.08px;font-size:15.5px;color:#767676;line-height:1;white-space:nowrap;-webkit-text-stroke:0.4px currentColor;font-weight:normal;letter-spacing:-0.463px;">Usage</div><svg class="abs" style="left:1150px;top:867px;width:12px;height:12px" viewBox="0 0 13 13"><path d="M1.5 11.5L11 2M3.5 1.8H11.2V9.5" fill="none" stroke="#d6d6d6" stroke-width="1.7"/></svg><div class="abs" style="left:1337px;top:853px;width:93px;height:40px;border:1px solid #a0a0a0;border-radius:4px"></div><div class="abs" style="left:1347.7px;top:865.50px;font-size:15px;color:#212121;line-height:1;white-space:nowrap;letter-spacing:0.350px;">Entities</div><svg class="abs" style="left:1405px;top:869px;width:12px;height:9px" viewBox="0 0 12 9"><path d="M1 1.2L6 7L11 1.2" fill="none" stroke="#757575" stroke-width="1.5"/></svg><div class="abs" style="left:1095.3px;top:915.25px;font-size:14px;color:#a8a8a8;line-height:1;white-space:nowrap;letter-spacing:-0.114px;">Devices</div><div class="abs" style="left:1323.7px;top:914.83px;font-size:14.5px;color:#333333;line-height:1;white-space:nowrap;">1 / <span style="font-size:20px;vertical-align:-1px">∞</span></div><div class="ubar" style="top:916.7px"></div><div class="abs" style="left:1095.3px;top:943.70px;font-size:14px;color:#a8a8a8;line-height:1;white-space:nowrap;letter-spacing:0.164px;">Assets</div><div class="abs" style="left:1323.7px;top:943.28px;font-size:14.5px;color:#333333;line-height:1;white-space:nowrap;">0 / <span style="font-size:20px;vertical-align:-1px">∞</span></div><div class="ubar" style="top:945.2px"></div><div class="abs" style="left:1095.3px;top:972.15px;font-size:14px;color:#a8a8a8;line-height:1;white-space:nowrap;letter-spacing:-0.113px;">Users</div><div class="abs" style="left:1323.7px;top:971.73px;font-size:14.5px;color:#333333;line-height:1;white-space:nowrap;">4 / <span style="font-size:20px;vertical-align:-1px">∞</span></div><div class="ubar" style="top:973.6px"></div><div class="abs" style="left:1095.3px;top:1000.60px;font-size:14px;color:#a8a8a8;line-height:1;white-space:nowrap;letter-spacing:0.000px;">Dashboards</div><div class="abs" style="left:1323.7px;top:1000.18px;font-size:14.5px;color:#333333;line-height:1;white-space:nowrap;">15 / <span style="font-size:20px;vertical-align:-1px">∞</span></div><div class="ubar" style="top:1002.1px"></div><div class="abs" style="left:1095.3px;top:1029.05px;font-size:14px;color:#a8a8a8;line-height:1;white-space:nowrap;letter-spacing:0.090px;">Customers</div><div class="abs" style="left:1323.7px;top:1028.63px;font-size:14.5px;color:#333333;line-height:1;white-space:nowrap;">2 / <span style="font-size:20px;vertical-align:-1px">∞</span></div><div class="ubar" style="top:1030.5px"></div><div class="abs" style="left:1467.2px;top:857.21px;font-size:17px;color:#333333;line-height:1;white-space:nowrap;-webkit-text-stroke:0.4px currentColor;font-weight:normal;letter-spacing:0.238px;">Connect mobile app</div>
<div class="abs" style="left:1514px;top:912px;width:180px;height:53px;background:#000;border:1px solid #a6a6a6;border-radius:8px"></div><svg class="abs" style="left:1524px;top:916px;width:42px;height:42px" viewBox="0 0 24 24"><path d="M18.7 19.5c-.8 1.2-1.7 2.5-3 2.5s-1.8-.8-3.3-.8-2 .8-3.3.8c-1.3 0-2.3-1.3-3.1-2.5C4.3 17 3 12.5 4.7 9.4c.9-1.5 2.4-2.5 4.1-2.5 1.3 0 2.5.9 3.3.9.8 0 2.1-1 3.5-.9.6 0 2.3.2 3.4 1.8-.1.1-2 1.2-2 3.6 0 2.8 2.5 3.8 2.5 3.8-.1.1-.4 1.3-1.3 2.6zM13 3.5c.7-.8 1.9-1.5 2.9-1.5.1 1.2-.3 2.3-1 3.1-.7.8-1.8 1.5-2.9 1.4-.1-1.1.4-2.3 1-3z" fill="#fff"/></svg><div class="abs" style="left:1571.5px;top:919.42px;font-size:12.5px;color:#fff;line-height:1;white-space:nowrap;letter-spacing:0.745px;">Download on the</div><div class="abs" style="left:1570.5px;top:933.17px;font-size:26.5px;color:#fff;line-height:1;white-space:nowrap;-webkit-text-stroke:0.4px currentColor;font-weight:normal;letter-spacing:-1.262px;">App Store</div><div class="abs" style="left:1514px;top:976px;width:180px;height:53px;background:#000;border:1px solid #a6a6a6;border-radius:8px"></div><svg class="abs" style="left:1526px;top:986px;width:32px;height:34px" viewBox="0 0 30 34"><path d="M2 1.5L17.5 17 2 32.5C1.5 32.2 1.2 31.6 1.2 31V3c0-.6.3-1.2.8-1.5z" fill="#00a0ff"/>
<path d="M2 1.5c.5-.3 1.2-.3 1.8 0L22.5 12 17.5 17z" fill="#32a853"/>
<path d="M2 32.5L17.5 17l5 5L3.8 32.5c-.6.3-1.3.3-1.8 0z" fill="#ea4335"/>
<path d="M22.5 12l5.5 3.1c1.5.9 1.5 2.9 0 3.8L22.5 22l-5-5z" fill="#fbbc04"/></svg><div class="abs" style="left:1568.7px;top:982.69px;font-size:11px;color:#fff;line-height:1;white-space:nowrap;letter-spacing:-0.623px;">GET IT ON</div><div class="abs" style="left:1568px;top:995.68px;font-size:24px;color:#fff;line-height:1;white-space:nowrap;-webkit-text-stroke:0.4px currentColor;font-weight:normal;letter-spacing:-1.614px;">Google Play</div><svg class="abs" style="left:1718px;top:913px;width:116px;height:116px" viewBox="0 0 116 116" shape-rendering="crispEdges"><path d="M0.00 0.00h15.32v2.19h-15.32zM21.89 0.00h6.57v2.19h-6.57zM32.83 0.00h2.19v2.19h-2.19zM43.77 0.00h4.38v2.19h-4.38zM50.34 0.00h13.13v2.19h-13.13zM74.42 0.00h4.38v2.19h-4.38zM87.55 0.00h8.75v2.19h-8.75zM100.68 0.00h15.32v2.19h-15.32zM0.00 2.19h2.19v2.19h-2.19zM13.13 2.19h2.19v2.19h-2.19zM17.51 2.19h2.19v2.19h-2.19zM24.08 2.19h8.75v2.19h-8.75zM35.02 2.19h2.19v2.19h-2.19zM39.40 2.19h4.38v2.19h-4.38zM45.96 2.19h2.19v2.19h-2.19zM50.34 2.19h8.75v2.19h-8.75zM63.47 2.19h2.19v2.19h-2.19zM67.85 2.19h4.38v2.19h-4.38zM76.60 2.19h2.19v2.19h-2.19zM80.98 2.19h4.38v2.19h-4.38zM87.55 2.19h8.75v2.19h-8.75zM100.68 2.19h2.19v2.19h-2.19zM113.81 2.19h2.19v2.19h-2.19zM0.00 4.38h2.19v2.19h-2.19zM4.38 4.38h6.57v2.19h-6.57zM13.13 4.38h2.19v2.19h-2.19zM17.51 4.38h2.19v2.19h-2.19zM26.26 4.38h6.57v2.19h-6.57zM35.02 4.38h2.19v2.19h-2.19zM39.40 4.38h2.19v2.19h-2.19zM45.96 4.38h4.38v2.19h-4.38zM52.53 4.38h4.38v2.19h-4.38zM63.47 4.38h2.19v2.19h-2.19zM67.85 4.38h15.32v2.19h-15.32zM85.36 4.38h4.38v2.19h-4.38zM100.68 4.38h2.19v2.19h-2.19zM105.06 4.38h6.57v2.19h-6.57zM113.81 4.38h2.19v2.19h-2.19zM0.00 6.57h2.19v2.19h-2.19zM4.38 6.57h6.57v2.19h-6.57zM13.13 6.57h2.19v2.19h-2.19zM28.45 6.57h2.19v2.19h-2.19zM37.21 6.57h2.19v2.19h-2.19zM48.15 6.57h2.19v2.19h-2.19zM54.72 6.57h2.19v2.19h-2.19zM65.66 6.57h2.19v2.19h-2.19zM72.23 6.57h2.19v2.19h-2.19zM76.60 6.57h2.19v2.19h-2.19zM80.98 6.57h2.19v2.19h-2.19zM87.55 6.57h2.19v2.19h-2.19zM100.68 6.57h2.19v2.19h-2.19zM105.06 6.57h6.57v2.19h-6.57zM113.81 6.57h2.19v2.19h-2.19zM0.00 8.75h2.19v2.19h-2.19zM4.38 8.75h6.57v2.19h-6.57zM13.13 8.75h2.19v2.19h-2.19zM19.70 8.75h2.19v2.19h-2.19zM24.08 8.75h4.38v2.19h-4.38zM39.40 8.75h13.13v2.19h-13.13zM56.91 8.75h13.13v2.19h-13.13zM72.23 8.75h2.19v2.19h-2.19zM78.79 8.75h2.19v2.19h-2.19zM83.17 8.75h8.75v2.19h-8.75zM94.11 8.75h4.38v2.19h-4.38zM100.68 8.75h2.19v2.19h-2.19zM105.06 8.75h6.57v2.19h-6.57zM113.81 8.75h2.19v2.19h-2.19zM0.00 10.94h2.19v2.19h-2.19zM13.13 10.94h2.19v2.19h-2.19zM17.51 10.94h2.19v2.19h-2.19zM28.45 10.94h2.19v2.19h-2.19zM35.02 10.94h2.19v2.19h-2.19zM41.58 10.94h4.38v2.19h-4.38zM50.34 10.94h2.19v2.19h-2.19zM56.91 10.94h2.19v2.19h-2.19zM65.66 10.94h2.19v2.19h-2.19zM76.60 10.94h2.19v2.19h-2.19zM89.74 10.94h2.19v2.19h-2.19zM96.30 10.94h2.19v2.19h-2.19zM100.68 10.94h2.19v2.19h-2.19zM113.81 10.94h2.19v2.19h-2.19zM0.00 13.13h15.32v2.19h-15.32zM17.51 13.13h2.19v2.19h-2.19zM21.89 13.13h2.19v2.19h-2.19zM26.26 13.13h2.19v2.19h-2.19zM30.64 13.13h2.19v2.19h-2.19zM35.02 13.13h2.19v2.19h-2.19zM39.40 13.13h2.19v2.19h-2.19zM43.77 13.13h2.19v2.19h-2.19zM48.15 13.13h2.19v2.19h-2.19zM52.53 13.13h2.19v2.19h-2.19zM56.91 13.13h2.19v2.19h-2.19zM61.28 13.13h2.19v2.19h-2.19zM65.66 13.13h2.19v2.19h-2.19zM70.04 13.13h2.19v2.19h-2.19zM74.42 13.13h2.19v2.19h-2.19zM78.79 13.13h2.19v2.19h-2.19zM83.17 13.13h2.19v2.19h-2.19zM87.55 13.13h2.19v2.19h-2.19zM91.92 13.13h2.19v2.19h-2.19zM96.30 13.13h2.19v2.19h-2.19zM100.68 13.13h15.32v2.19h-15.32zM17.51 15.32h6.57v2.19h-6.57zM26.26 15.32h4.38v2.19h-4.38zM32.83 15.32h2.19v2.19h-2.19zM37.21 15.32h2.19v2.19h-2.19zM41.58 15.32h4.38v2.19h-4.38zM48.15 15.32h6.57v2.19h-6.57zM56.91 15.32h2.19v2.19h-2.19zM65.66 15.32h2.19v2.19h-2.19zM74.42 15.32h2.19v2.19h-2.19zM83.17 15.32h4.38v2.19h-4.38zM89.74 15.32h2.19v2.19h-2.19zM96.30 15.32h2.19v2.19h-2.19zM0.00 17.51h2.19v2.19h-2.19zM4.38 17.51h4.38v2.19h-4.38zM13.13 17.51h4.38v2.19h-4.38zM26.26 17.51h8.75v2.19h-8.75zM41.58 17.51h6.57v2.19h-6.57zM54.72 17.51h15.32v2.19h-15.32zM72.23 17.51h2.19v2.19h-2.19zM76.60 17.51h2.19v2.19h-2.19zM83.17 17.51h4.38v2.19h-4.38zM89.74 17.51h6.57v2.19h-6.57zM98.49 17.51h2.19v2.19h-2.19zM111.62 17.51h2.19v2.19h-2.19zM6.57 19.70h2.19v2.19h-2.19zM17.51 19.70h2.19v2.19h-2.19zM30.64 19.70h2.19v2.19h-2.19zM35.02 19.70h10.94v2.19h-10.94zM50.34 19.70h2.19v2.19h-2.19zM56.91 19.70h2.19v2.19h-2.19zM65.66 19.70h2.19v2.19h-2.19zM78.79 19.70h2.19v2.19h-2.19zM85.36 19.70h15.32v2.19h-15.32zM2.19 21.89h2.19v2.19h-2.19zM8.75 21.89h2.19v2.19h-2.19zM13.13 21.89h2.19v2.19h-2.19zM17.51 21.89h2.19v2.19h-2.19zM24.08 21.89h2.19v2.19h-2.19zM28.45 21.89h2.19v2.19h-2.19zM35.02 21.89h4.38v2.19h-4.38zM43.77 21.89h2.19v2.19h-2.19zM48.15 21.89h10.94v2.19h-10.94zM61.28 21.89h2.19v2.19h-2.19zM67.85 21.89h2.19v2.19h-2.19zM74.42 21.89h2.19v2.19h-2.19zM78.79 21.89h2.19v2.19h-2.19zM85.36 21.89h2.19v2.19h-2.19zM94.11 21.89h2.19v2.19h-2.19zM102.87 21.89h2.19v2.19h-2.19zM107.25 21.89h6.57v2.19h-6.57zM0.00 24.08h4.38v2.19h-4.38zM6.57 24.08h4.38v2.19h-4.38zM26.26 24.08h4.38v2.19h-4.38zM37.21 24.08h4.38v2.19h-4.38zM52.53 24.08h4.38v2.19h-4.38zM63.47 24.08h8.75v2.19h-8.75zM74.42 24.08h2.19v2.19h-2.19zM78.79 24.08h4.38v2.19h-4.38zM89.74 24.08h2.19v2.19h-2.19zM94.11 24.08h4.38v2.19h-4.38zM102.87 24.08h4.38v2.19h-4.38zM113.81 24.08h2.19v2.19h-2.19zM0.00 26.26h4.38v2.19h-4.38zM6.57 26.26h2.19v2.19h-2.19zM13.13 26.26h2.19v2.19h-2.19zM21.89 26.26h6.57v2.19h-6.57zM30.64 26.26h4.38v2.19h-4.38zM41.58 26.26h2.19v2.19h-2.19zM45.96 26.26h4.38v2.19h-4.38zM52.53 26.26h4.38v2.19h-4.38zM61.28 26.26h6.57v2.19h-6.57zM70.04 26.26h4.38v2.19h-4.38zM85.36 26.26h2.19v2.19h-2.19zM89.74 26.26h6.57v2.19h-6.57zM100.68 26.26h15.32v2.19h-15.32zM10.94 28.45h2.19v2.19h-2.19zM17.51 28.45h4.38v2.19h-4.38zM35.02 28.45h2.19v2.19h-2.19zM41.58 28.45h4.38v2.19h-4.38zM50.34 28.45h2.19v2.19h-2.19zM54.72 28.45h2.19v2.19h-2.19zM61.28 28.45h4.38v2.19h-4.38zM72.23 28.45h4.38v2.19h-4.38zM91.92 28.45h2.19v2.19h-2.19zM2.19 30.64h6.57v2.19h-6.57zM13.13 30.64h10.94v2.19h-10.94zM26.26 30.64h6.57v2.19h-6.57zM37.21 30.64h6.57v2.19h-6.57zM48.15 30.64h10.94v2.19h-10.94zM63.47 30.64h8.75v2.19h-8.75zM74.42 30.64h2.19v2.19h-2.19zM83.17 30.64h2.19v2.19h-2.19zM89.74 30.64h2.19v2.19h-2.19zM98.49 30.64h4.38v2.19h-4.38zM107.25 30.64h2.19v2.19h-2.19zM113.81 30.64h2.19v2.19h-2.19zM4.38 32.83h4.38v2.19h-4.38zM10.94 32.83h2.19v2.19h-2.19zM19.70 32.83h8.75v2.19h-8.75zM37.21 32.83h2.19v2.19h-2.19zM41.58 32.83h2.19v2.19h-2.19zM45.96 32.83h2.19v2.19h-2.19zM54.72 32.83h4.38v2.19h-4.38zM61.28 32.83h2.19v2.19h-2.19zM65.66 32.83h2.19v2.19h-2.19zM74.42 32.83h2.19v2.19h-2.19zM78.79 32.83h2.19v2.19h-2.19zM83.17 32.83h2.19v2.19h-2.19zM87.55 32.83h2.19v2.19h-2.19zM94.11 32.83h2.19v2.19h-2.19zM98.49 32.83h10.94v2.19h-10.94zM111.62 32.83h2.19v2.19h-2.19zM0.00 35.02h6.57v2.19h-6.57zM13.13 35.02h4.38v2.19h-4.38zM19.70 35.02h2.19v2.19h-2.19zM24.08 35.02h4.38v2.19h-4.38zM32.83 35.02h2.19v2.19h-2.19zM37.21 35.02h4.38v2.19h-4.38zM43.77 35.02h6.57v2.19h-6.57zM52.53 35.02h4.38v2.19h-4.38zM59.09 35.02h2.19v2.19h-2.19zM67.85 35.02h2.19v2.19h-2.19zM72.23 35.02h6.57v2.19h-6.57zM83.17 35.02h4.38v2.19h-4.38zM91.92 35.02h13.13v2.19h-13.13zM107.25 35.02h2.19v2.19h-2.19zM2.19 37.21h10.94v2.19h-10.94zM24.08 37.21h6.57v2.19h-6.57zM32.83 37.21h4.38v2.19h-4.38zM45.96 37.21h2.19v2.19h-2.19zM54.72 37.21h2.19v2.19h-2.19zM59.09 37.21h2.19v2.19h-2.19zM72.23 37.21h2.19v2.19h-2.19zM78.79 37.21h6.57v2.19h-6.57zM89.74 37.21h2.19v2.19h-2.19zM94.11 37.21h6.57v2.19h-6.57zM102.87 37.21h2.19v2.19h-2.19zM113.81 37.21h2.19v2.19h-2.19zM8.75 39.40h2.19v2.19h-2.19zM13.13 39.40h2.19v2.19h-2.19zM17.51 39.40h2.19v2.19h-2.19zM24.08 39.40h2.19v2.19h-2.19zM28.45 39.40h6.57v2.19h-6.57zM41.58 39.40h2.19v2.19h-2.19zM48.15 39.40h2.19v2.19h-2.19zM54.72 39.40h10.94v2.19h-10.94zM67.85 39.40h2.19v2.19h-2.19zM72.23 39.40h2.19v2.19h-2.19zM76.60 39.40h2.19v2.19h-2.19zM80.98 39.40h2.19v2.19h-2.19zM85.36 39.40h2.19v2.19h-2.19zM91.92 39.40h4.38v2.19h-4.38zM113.81 39.40h2.19v2.19h-2.19zM0.00 41.58h2.19v2.19h-2.19zM10.94 41.58h2.19v2.19h-2.19zM15.32 41.58h4.38v2.19h-4.38zM30.64 41.58h2.19v2.19h-2.19zM35.02 41.58h6.57v2.19h-6.57zM43.77 41.58h4.38v2.19h-4.38zM52.53 41.58h10.94v2.19h-10.94zM72.23 41.58h2.19v2.19h-2.19zM76.60 41.58h2.19v2.19h-2.19zM85.36 41.58h2.19v2.19h-2.19zM89.74 41.58h2.19v2.19h-2.19zM96.30 41.58h10.94v2.19h-10.94zM111.62 41.58h4.38v2.19h-4.38zM2.19 43.77h4.38v2.19h-4.38zM8.75 43.77h2.19v2.19h-2.19zM13.13 43.77h2.19v2.19h-2.19zM19.70 43.77h4.38v2.19h-4.38zM28.45 43.77h2.19v2.19h-2.19zM32.83 43.77h2.19v2.19h-2.19zM37.21 43.77h2.19v2.19h-2.19zM43.77 43.77h2.19v2.19h-2.19zM48.15 43.77h2.19v2.19h-2.19zM52.53 43.77h4.38v2.19h-4.38zM59.09 43.77h2.19v2.19h-2.19zM67.85 43.77h2.19v2.19h-2.19zM74.42 43.77h8.75v2.19h-8.75zM85.36 43.77h6.57v2.19h-6.57zM96.30 43.77h2.19v2.19h-2.19zM105.06 43.77h4.38v2.19h-4.38zM113.81 43.77h2.19v2.19h-2.19zM2.19 45.96h2.19v2.19h-2.19zM6.57 45.96h2.19v2.19h-2.19zM17.51 45.96h4.38v2.19h-4.38zM24.08 45.96h4.38v2.19h-4.38zM30.64 45.96h4.38v2.19h-4.38zM37.21 45.96h2.19v2.19h-2.19zM43.77 45.96h4.38v2.19h-4.38zM50.34 45.96h2.19v2.19h-2.19zM56.91 45.96h2.19v2.19h-2.19zM63.47 45.96h2.19v2.19h-2.19zM83.17 45.96h2.19v2.19h-2.19zM87.55 45.96h2.19v2.19h-2.19zM91.92 45.96h4.38v2.19h-4.38zM102.87 45.96h2.19v2.19h-2.19zM107.25 45.96h2.19v2.19h-2.19zM113.81 45.96h2.19v2.19h-2.19zM8.75 48.15h6.57v2.19h-6.57zM17.51 48.15h6.57v2.19h-6.57zM26.26 48.15h2.19v2.19h-2.19zM37.21 48.15h10.94v2.19h-10.94zM52.53 48.15h2.19v2.19h-2.19zM56.91 48.15h2.19v2.19h-2.19zM61.28 48.15h6.57v2.19h-6.57zM74.42 48.15h8.75v2.19h-8.75zM85.36 48.15h2.19v2.19h-2.19zM94.11 48.15h4.38v2.19h-4.38zM100.68 48.15h4.38v2.19h-4.38zM107.25 48.15h8.75v2.19h-8.75zM0.00 50.34h4.38v2.19h-4.38zM10.94 50.34h2.19v2.19h-2.19zM17.51 50.34h4.38v2.19h-4.38zM24.08 50.34h4.38v2.19h-4.38zM32.83 50.34h4.38v2.19h-4.38zM39.40 50.34h4.38v2.19h-4.38zM52.53 50.34h4.38v2.19h-4.38zM59.09 50.34h2.19v2.19h-2.19zM63.47 50.34h6.57v2.19h-6.57zM72.23 50.34h13.13v2.19h-13.13zM91.92 50.34h6.57v2.19h-6.57zM100.68 50.34h13.13v2.19h-13.13zM2.19 52.53h6.57v2.19h-6.57zM10.94 52.53h4.38v2.19h-4.38zM19.70 52.53h8.75v2.19h-8.75zM30.64 52.53h2.19v2.19h-2.19zM37.21 52.53h10.94v2.19h-10.94zM50.34 52.53h6.57v2.19h-6.57zM59.09 52.53h2.19v2.19h-2.19zM63.47 52.53h2.19v2.19h-2.19zM70.04 52.53h6.57v2.19h-6.57zM78.79 52.53h4.38v2.19h-4.38zM85.36 52.53h13.13v2.19h-13.13zM107.25 52.53h2.19v2.19h-2.19zM113.81 52.53h2.19v2.19h-2.19zM8.75 54.72h2.19v2.19h-2.19zM15.32 54.72h10.94v2.19h-10.94zM28.45 54.72h6.57v2.19h-6.57zM37.21 54.72h2.19v2.19h-2.19zM41.58 54.72h10.94v2.19h-10.94zM61.28 54.72h13.13v2.19h-13.13zM78.79 54.72h10.94v2.19h-10.94zM94.11 54.72h2.19v2.19h-2.19zM98.49 54.72h4.38v2.19h-4.38zM107.25 54.72h2.19v2.19h-2.19zM4.38 56.91h19.70v2.19h-19.70zM26.26 56.91h4.38v2.19h-4.38zM32.83 56.91h6.57v2.19h-6.57zM41.58 56.91h4.38v2.19h-4.38zM48.15 56.91h4.38v2.19h-4.38zM56.91 56.91h15.32v2.19h-15.32zM74.42 56.91h2.19v2.19h-2.19zM87.55 56.91h2.19v2.19h-2.19zM96.30 56.91h4.38v2.19h-4.38zM105.06 56.91h10.94v2.19h-10.94zM0.00 59.09h10.94v2.19h-10.94zM17.51 59.09h4.38v2.19h-4.38zM26.26 59.09h4.38v2.19h-4.38zM35.02 59.09h2.19v2.19h-2.19zM39.40 59.09h2.19v2.19h-2.19zM43.77 59.09h4.38v2.19h-4.38zM56.91 59.09h2.19v2.19h-2.19zM65.66 59.09h6.57v2.19h-6.57zM74.42 59.09h6.57v2.19h-6.57zM87.55 59.09h2.19v2.19h-2.19zM91.92 59.09h2.19v2.19h-2.19zM96.30 59.09h2.19v2.19h-2.19zM102.87 59.09h4.38v2.19h-4.38zM113.81 59.09h2.19v2.19h-2.19zM2.19 61.28h8.75v2.19h-8.75zM13.13 61.28h2.19v2.19h-2.19zM17.51 61.28h2.19v2.19h-2.19zM21.89 61.28h4.38v2.19h-4.38zM32.83 61.28h2.19v2.19h-2.19zM41.58 61.28h6.57v2.19h-6.57zM50.34 61.28h2.19v2.19h-2.19zM54.72 61.28h4.38v2.19h-4.38zM61.28 61.28h2.19v2.19h-2.19zM65.66 61.28h6.57v2.19h-6.57zM74.42 61.28h8.75v2.19h-8.75zM85.36 61.28h6.57v2.19h-6.57zM96.30 61.28h2.19v2.19h-2.19zM102.87 61.28h4.38v2.19h-4.38zM109.43 61.28h2.19v2.19h-2.19zM113.81 61.28h2.19v2.19h-2.19zM2.19 63.47h2.19v2.19h-2.19zM8.75 63.47h2.19v2.19h-2.19zM17.51 63.47h13.13v2.19h-13.13zM32.83 63.47h2.19v2.19h-2.19zM37.21 63.47h4.38v2.19h-4.38zM43.77 63.47h2.19v2.19h-2.19zM54.72 63.47h4.38v2.19h-4.38zM65.66 63.47h2.19v2.19h-2.19zM70.04 63.47h2.19v2.19h-2.19zM74.42 63.47h2.19v2.19h-2.19zM78.79 63.47h2.19v2.19h-2.19zM83.17 63.47h6.57v2.19h-6.57zM94.11 63.47h2.19v2.19h-2.19zM98.49 63.47h4.38v2.19h-4.38zM105.06 63.47h2.19v2.19h-2.19zM113.81 63.47h2.19v2.19h-2.19zM6.57 65.66h13.13v2.19h-13.13zM21.89 65.66h4.38v2.19h-4.38zM30.64 65.66h2.19v2.19h-2.19zM35.02 65.66h2.19v2.19h-2.19zM39.40 65.66h2.19v2.19h-2.19zM43.77 65.66h2.19v2.19h-2.19zM48.15 65.66h4.38v2.19h-4.38zM54.72 65.66h15.32v2.19h-15.32zM72.23 65.66h2.19v2.19h-2.19zM76.60 65.66h2.19v2.19h-2.19zM80.98 65.66h2.19v2.19h-2.19zM96.30 65.66h2.19v2.19h-2.19zM102.87 65.66h13.13v2.19h-13.13zM4.38 67.85h2.19v2.19h-2.19zM8.75 67.85h2.19v2.19h-2.19zM17.51 67.85h4.38v2.19h-4.38zM26.26 67.85h2.19v2.19h-2.19zM32.83 67.85h2.19v2.19h-2.19zM37.21 67.85h2.19v2.19h-2.19zM43.77 67.85h2.19v2.19h-2.19zM61.28 67.85h2.19v2.19h-2.19zM67.85 67.85h2.19v2.19h-2.19zM72.23 67.85h2.19v2.19h-2.19zM78.79 67.85h4.38v2.19h-4.38zM85.36 67.85h2.19v2.19h-2.19zM94.11 67.85h2.19v2.19h-2.19zM109.43 67.85h6.57v2.19h-6.57zM0.00 70.04h4.38v2.19h-4.38zM8.75 70.04h6.57v2.19h-6.57zM21.89 70.04h2.19v2.19h-2.19zM26.26 70.04h2.19v2.19h-2.19zM35.02 70.04h2.19v2.19h-2.19zM39.40 70.04h8.75v2.19h-8.75zM50.34 70.04h2.19v2.19h-2.19zM56.91 70.04h4.38v2.19h-4.38zM63.47 70.04h6.57v2.19h-6.57zM74.42 70.04h4.38v2.19h-4.38zM85.36 70.04h8.75v2.19h-8.75zM96.30 70.04h2.19v2.19h-2.19zM100.68 70.04h4.38v2.19h-4.38zM109.43 70.04h2.19v2.19h-2.19zM113.81 70.04h2.19v2.19h-2.19zM2.19 72.23h2.19v2.19h-2.19zM6.57 72.23h2.19v2.19h-2.19zM17.51 72.23h2.19v2.19h-2.19zM24.08 72.23h10.94v2.19h-10.94zM37.21 72.23h2.19v2.19h-2.19zM43.77 72.23h6.57v2.19h-6.57zM52.53 72.23h6.57v2.19h-6.57zM67.85 72.23h2.19v2.19h-2.19zM72.23 72.23h6.57v2.19h-6.57zM83.17 72.23h2.19v2.19h-2.19zM89.74 72.23h2.19v2.19h-2.19zM94.11 72.23h8.75v2.19h-8.75zM113.81 72.23h2.19v2.19h-2.19zM8.75 74.42h6.57v2.19h-6.57zM17.51 74.42h2.19v2.19h-2.19zM21.89 74.42h8.75v2.19h-8.75zM32.83 74.42h4.38v2.19h-4.38zM43.77 74.42h2.19v2.19h-2.19zM52.53 74.42h6.57v2.19h-6.57zM65.66 74.42h4.38v2.19h-4.38zM74.42 74.42h2.19v2.19h-2.19zM78.79 74.42h2.19v2.19h-2.19zM83.17 74.42h2.19v2.19h-2.19zM87.55 74.42h4.38v2.19h-4.38zM94.11 74.42h2.19v2.19h-2.19zM98.49 74.42h10.94v2.19h-10.94zM111.62 74.42h2.19v2.19h-2.19zM0.00 76.60h2.19v2.19h-2.19zM4.38 76.60h2.19v2.19h-2.19zM10.94 76.60h2.19v2.19h-2.19zM19.70 76.60h6.57v2.19h-6.57zM32.83 76.60h2.19v2.19h-2.19zM37.21 76.60h6.57v2.19h-6.57zM50.34 76.60h10.94v2.19h-10.94zM63.47 76.60h2.19v2.19h-2.19zM80.98 76.60h4.38v2.19h-4.38zM87.55 76.60h6.57v2.19h-6.57zM96.30 76.60h8.75v2.19h-8.75zM107.25 76.60h2.19v2.19h-2.19zM113.81 76.60h2.19v2.19h-2.19zM0.00 78.79h8.75v2.19h-8.75zM10.94 78.79h4.38v2.19h-4.38zM17.51 78.79h4.38v2.19h-4.38zM24.08 78.79h2.19v2.19h-2.19zM30.64 78.79h2.19v2.19h-2.19zM35.02 78.79h4.38v2.19h-4.38zM43.77 78.79h2.19v2.19h-2.19zM52.53 78.79h8.75v2.19h-8.75zM63.47 78.79h2.19v2.19h-2.19zM67.85 78.79h4.38v2.19h-4.38zM74.42 78.79h2.19v2.19h-2.19zM80.98 78.79h4.38v2.19h-4.38zM91.92 78.79h2.19v2.19h-2.19zM96.30 78.79h2.19v2.19h-2.19zM107.25 78.79h2.19v2.19h-2.19zM0.00 80.98h2.19v2.19h-2.19zM4.38 80.98h2.19v2.19h-2.19zM17.51 80.98h2.19v2.19h-2.19zM21.89 80.98h10.94v2.19h-10.94zM35.02 80.98h4.38v2.19h-4.38zM45.96 80.98h6.57v2.19h-6.57zM59.09 80.98h4.38v2.19h-4.38zM67.85 80.98h2.19v2.19h-2.19zM74.42 80.98h6.57v2.19h-6.57zM89.74 80.98h2.19v2.19h-2.19zM94.11 80.98h2.19v2.19h-2.19zM98.49 80.98h2.19v2.19h-2.19zM102.87 80.98h8.75v2.19h-8.75zM0.00 83.17h2.19v2.19h-2.19zM6.57 83.17h2.19v2.19h-2.19zM13.13 83.17h4.38v2.19h-4.38zM19.70 83.17h4.38v2.19h-4.38zM28.45 83.17h4.38v2.19h-4.38zM35.02 83.17h2.19v2.19h-2.19zM39.40 83.17h2.19v2.19h-2.19zM50.34 83.17h2.19v2.19h-2.19zM54.72 83.17h2.19v2.19h-2.19zM59.09 83.17h4.38v2.19h-4.38zM65.66 83.17h2.19v2.19h-2.19zM74.42 83.17h4.38v2.19h-4.38zM85.36 83.17h2.19v2.19h-2.19zM89.74 83.17h4.38v2.19h-4.38zM98.49 83.17h2.19v2.19h-2.19zM111.62 83.17h2.19v2.19h-2.19zM2.19 85.36h2.19v2.19h-2.19zM8.75 85.36h4.38v2.19h-4.38zM17.51 85.36h8.75v2.19h-8.75zM28.45 85.36h6.57v2.19h-6.57zM39.40 85.36h2.19v2.19h-2.19zM61.28 85.36h4.38v2.19h-4.38zM67.85 85.36h2.19v2.19h-2.19zM72.23 85.36h6.57v2.19h-6.57zM87.55 85.36h4.38v2.19h-4.38zM94.11 85.36h2.19v2.19h-2.19zM100.68 85.36h2.19v2.19h-2.19zM105.06 85.36h2.19v2.19h-2.19zM109.43 85.36h2.19v2.19h-2.19zM113.81 85.36h2.19v2.19h-2.19zM2.19 87.55h2.19v2.19h-2.19zM6.57 87.55h4.38v2.19h-4.38zM13.13 87.55h2.19v2.19h-2.19zM24.08 87.55h2.19v2.19h-2.19zM28.45 87.55h2.19v2.19h-2.19zM32.83 87.55h2.19v2.19h-2.19zM37.21 87.55h2.19v2.19h-2.19zM41.58 87.55h2.19v2.19h-2.19zM45.96 87.55h2.19v2.19h-2.19zM56.91 87.55h6.57v2.19h-6.57zM78.79 87.55h2.19v2.19h-2.19zM94.11 87.55h2.19v2.19h-2.19zM100.68 87.55h4.38v2.19h-4.38zM109.43 87.55h4.38v2.19h-4.38zM10.94 89.74h2.19v2.19h-2.19zM21.89 89.74h8.75v2.19h-8.75zM32.83 89.74h2.19v2.19h-2.19zM39.40 89.74h2.19v2.19h-2.19zM43.77 89.74h4.38v2.19h-4.38zM50.34 89.74h6.57v2.19h-6.57zM61.28 89.74h4.38v2.19h-4.38zM67.85 89.74h2.19v2.19h-2.19zM72.23 89.74h2.19v2.19h-2.19zM76.60 89.74h8.75v2.19h-8.75zM94.11 89.74h2.19v2.19h-2.19zM98.49 89.74h6.57v2.19h-6.57zM107.25 89.74h4.38v2.19h-4.38zM0.00 91.92h4.38v2.19h-4.38zM8.75 91.92h2.19v2.19h-2.19zM13.13 91.92h4.38v2.19h-4.38zM26.26 91.92h2.19v2.19h-2.19zM30.64 91.92h4.38v2.19h-4.38zM37.21 91.92h4.38v2.19h-4.38zM48.15 91.92h2.19v2.19h-2.19zM52.53 91.92h2.19v2.19h-2.19zM59.09 91.92h4.38v2.19h-4.38zM72.23 91.92h8.75v2.19h-8.75zM83.17 91.92h15.32v2.19h-15.32zM111.62 91.92h4.38v2.19h-4.38zM0.00 94.11h4.38v2.19h-4.38zM10.94 94.11h2.19v2.19h-2.19zM17.51 94.11h2.19v2.19h-2.19zM24.08 94.11h2.19v2.19h-2.19zM30.64 94.11h4.38v2.19h-4.38zM39.40 94.11h2.19v2.19h-2.19zM43.77 94.11h8.75v2.19h-8.75zM54.72 94.11h6.57v2.19h-6.57zM67.85 94.11h13.13v2.19h-13.13zM83.17 94.11h2.19v2.19h-2.19zM89.74 94.11h4.38v2.19h-4.38zM98.49 94.11h2.19v2.19h-2.19zM102.87 94.11h4.38v2.19h-4.38zM109.43 94.11h2.19v2.19h-2.19zM2.19 96.30h2.19v2.19h-2.19zM8.75 96.30h8.75v2.19h-8.75zM19.70 96.30h2.19v2.19h-2.19zM24.08 96.30h4.38v2.19h-4.38zM30.64 96.30h2.19v2.19h-2.19zM41.58 96.30h4.38v2.19h-4.38zM48.15 96.30h2.19v2.19h-2.19zM54.72 96.30h4.38v2.19h-4.38zM67.85 96.30h6.57v2.19h-6.57zM76.60 96.30h2.19v2.19h-2.19zM83.17 96.30h2.19v2.19h-2.19zM89.74 96.30h2.19v2.19h-2.19zM100.68 96.30h2.19v2.19h-2.19zM107.25 96.30h6.57v2.19h-6.57zM17.51 98.49h2.19v2.19h-2.19zM21.89 98.49h4.38v2.19h-4.38zM28.45 98.49h2.19v2.19h-2.19zM32.83 98.49h2.19v2.19h-2.19zM45.96 98.49h2.19v2.19h-2.19zM50.34 98.49h2.19v2.19h-2.19zM56.91 98.49h4.38v2.19h-4.38zM70.04 98.49h2.19v2.19h-2.19zM74.42 98.49h2.19v2.19h-2.19zM94.11 98.49h8.75v2.19h-8.75zM105.06 98.49h2.19v2.19h-2.19zM0.00 100.68h15.32v2.19h-15.32zM19.70 100.68h2.19v2.19h-2.19zM30.64 100.68h4.38v2.19h-4.38zM39.40 100.68h2.19v2.19h-2.19zM50.34 100.68h4.38v2.19h-4.38zM56.91 100.68h10.94v2.19h-10.94zM74.42 100.68h6.57v2.19h-6.57zM85.36 100.68h4.38v2.19h-4.38zM102.87 100.68h2.19v2.19h-2.19zM111.62 100.68h2.19v2.19h-2.19zM0.00 102.87h2.19v2.19h-2.19zM13.13 102.87h2.19v2.19h-2.19zM21.89 102.87h6.57v2.19h-6.57zM35.02 102.87h6.57v2.19h-6.57zM43.77 102.87h6.57v2.19h-6.57zM54.72 102.87h2.19v2.19h-2.19zM63.47 102.87h2.19v2.19h-2.19zM67.85 102.87h4.38v2.19h-4.38zM74.42 102.87h10.94v2.19h-10.94zM94.11 102.87h2.19v2.19h-2.19zM98.49 102.87h6.57v2.19h-6.57zM109.43 102.87h4.38v2.19h-4.38zM0.00 105.06h2.19v2.19h-2.19zM4.38 105.06h6.57v2.19h-6.57zM13.13 105.06h2.19v2.19h-2.19zM19.70 105.06h4.38v2.19h-4.38zM26.26 105.06h2.19v2.19h-2.19zM32.83 105.06h4.38v2.19h-4.38zM43.77 105.06h2.19v2.19h-2.19zM50.34 105.06h2.19v2.19h-2.19zM56.91 105.06h10.94v2.19h-10.94zM74.42 105.06h2.19v2.19h-2.19zM78.79 105.06h4.38v2.19h-4.38zM85.36 105.06h2.19v2.19h-2.19zM89.74 105.06h4.38v2.19h-4.38zM96.30 105.06h2.19v2.19h-2.19zM100.68 105.06h2.19v2.19h-2.19zM105.06 105.06h10.94v2.19h-10.94zM0.00 107.25h2.19v2.19h-2.19zM4.38 107.25h6.57v2.19h-6.57zM13.13 107.25h2.19v2.19h-2.19zM17.51 107.25h2.19v2.19h-2.19zM21.89 107.25h2.19v2.19h-2.19zM28.45 107.25h2.19v2.19h-2.19zM37.21 107.25h2.19v2.19h-2.19zM45.96 107.25h2.19v2.19h-2.19zM50.34 107.25h4.38v2.19h-4.38zM56.91 107.25h2.19v2.19h-2.19zM65.66 107.25h4.38v2.19h-4.38zM72.23 107.25h4.38v2.19h-4.38zM83.17 107.25h6.57v2.19h-6.57zM91.92 107.25h4.38v2.19h-4.38zM98.49 107.25h4.38v2.19h-4.38zM105.06 107.25h2.19v2.19h-2.19zM113.81 107.25h2.19v2.19h-2.19zM0.00 109.43h2.19v2.19h-2.19zM4.38 109.43h6.57v2.19h-6.57zM13.13 109.43h2.19v2.19h-2.19zM17.51 109.43h2.19v2.19h-2.19zM24.08 109.43h2.19v2.19h-2.19zM28.45 109.43h2.19v2.19h-2.19zM32.83 109.43h4.38v2.19h-4.38zM45.96 109.43h4.38v2.19h-4.38zM52.53 109.43h2.19v2.19h-2.19zM56.91 109.43h2.19v2.19h-2.19zM61.28 109.43h2.19v2.19h-2.19zM65.66 109.43h2.19v2.19h-2.19zM70.04 109.43h4.38v2.19h-4.38zM76.60 109.43h2.19v2.19h-2.19zM83.17 109.43h6.57v2.19h-6.57zM91.92 109.43h2.19v2.19h-2.19zM96.30 109.43h2.19v2.19h-2.19zM105.06 109.43h2.19v2.19h-2.19zM109.43 109.43h2.19v2.19h-2.19zM113.81 109.43h2.19v2.19h-2.19zM0.00 111.62h2.19v2.19h-2.19zM13.13 111.62h2.19v2.19h-2.19zM19.70 111.62h6.57v2.19h-6.57zM28.45 111.62h15.32v2.19h-15.32zM45.96 111.62h4.38v2.19h-4.38zM52.53 111.62h2.19v2.19h-2.19zM56.91 111.62h2.19v2.19h-2.19zM65.66 111.62h2.19v2.19h-2.19zM72.23 111.62h4.38v2.19h-4.38zM78.79 111.62h2.19v2.19h-2.19zM89.74 111.62h8.75v2.19h-8.75zM102.87 111.62h4.38v2.19h-4.38zM113.81 111.62h2.19v2.19h-2.19zM0.00 113.81h15.32v2.19h-15.32zM17.51 113.81h4.38v2.19h-4.38zM28.45 113.81h2.19v2.19h-2.19zM37.21 113.81h2.19v2.19h-2.19zM41.58 113.81h6.57v2.19h-6.57zM50.34 113.81h2.19v2.19h-2.19zM56.91 113.81h13.13v2.19h-13.13zM74.42 113.81h4.38v2.19h-4.38zM80.98 113.81h2.19v2.19h-2.19zM87.55 113.81h4.38v2.19h-4.38zM94.11 113.81h4.38v2.19h-4.38zM100.68 113.81h2.19v2.19h-2.19zM105.06 113.81h10.94v2.19h-10.94z" fill="#000"/></svg><div class="abs" style="left:1845px;top:15px;width:50px;height:50px;border:3px solid #fbc12e;border-radius:50%;z-index:6"></div><div class="abs" style="left:1577px;top:67px;width:327px;height:147px;background:#fff;border-radius:11px;box-shadow:0 5px 12px rgba(0,0,0,.22),0 2px 4px rgba(0,0,0,.12);z-index:7"></div><div class="ybox" style="left:1577px;top:67px;width:327px;height:147px;background:#fff9ee;box-shadow:inset 0 0 7px rgba(251,180,60,.35);z-index:7"></div><div class="abs" style="left:1580px;top:143px;width:321px;height:68px;background:#fff;border-radius:0 0 8px 8px;box-shadow:inset 0 -4px 6px -3px rgba(251,180,60,.3);z-index:7"></div><div class="ybox" style="left:1583px;top:77px;width:315px;height:67px;background:#f3f3f3;box-shadow:inset 0 0 6px rgba(251,180,60,.3), 0 0 3px rgba(251,180,60,.4);z-index:7"></div><div class="abs" style="left:0;top:0;width:1920px;height:1080px;z-index:8;pointer-events:none"><svg class="abs" style="left:1600px;top:95px;width:30px;height:30px" viewBox="0 0 24 24"><path d="M12 2C6.48 2 2 6.48 2 12s4.48 10 10 10 10-4.48 10-10S17.52 2 12 2zm0 3.4c1.7 0 3.1 1.4 3.1 3.1S13.7 11.6 12 11.6 8.9 10.2 8.9 8.5 10.3 5.4 12 5.4zm0 14.4c-2.5 0-4.7-.8-5.9-2.5.3-1.6 3.5-2.8 5.9-2.8s5.6 1.2 5.9 2.8c-1.2 1.7-3.4 2.5-5.9 2.5z" fill="#1f1f1f"/></svg><div class="abs" style="left:1650px;top:99.87px;font-size:20px;color:#1f1f1f;line-height:1;white-space:nowrap;letter-spacing:0.676px;">Account</div><svg class="abs" style="left:1601px;top:156px;width:27px;height:27px" viewBox="0 0 24 24"><path d="M10.09 15.59L11.5 17l5-5-5-5-1.41 1.41L12.67 11H3v2h9.67l-2.58 2.59zM19 3H5c-1.11 0-2 .9-2 2v4h2V5h14v14H5v-4H3v4c0 1.1.89 2 2 2h14c1.1 0 2-.9 2-2V5c0-1.1-.9-2-2-2z" fill="#1f1f1f"/></svg><div class="abs" style="left:1650px;top:160.07px;font-size:20px;color:#1f1f1f;line-height:1;white-space:nowrap;letter-spacing:0.721px;">Logout</div><div class="badge" style="left:1607px;top:45px"></div><div class="abs" style="left:1422px;width:400px;text-align:center;top:50.14px;font-size:27px;color:#111;line-height:1;white-space:nowrap;">2</div><div class="badge" style="left:1882px;top:4px"></div><div class="abs" style="left:1696.5px;width:400px;text-align:center;top:8.30px;font-size:28px;color:#111;line-height:1;white-space:nowrap;">1</div><svg class="abs" style="left:1776px;top:96px;width:20px;height:30px;overflow:visible" viewBox="-1 -1 20 30">
<path d="M4 1.4Q5.8-.4 7.6 1.4V5.6H10.4V6.6H13.1L16.9 9.6V17.2L14.9 20.2V26.8H5V20.2L3 16.6L.2 13V9.3L2.6 8.9L4 10.6Z" fill="#fff" stroke="#fff" stroke-width="2.6" stroke-linejoin="round"/>
<path d="M4 1.4Q5.8-.4 7.6 1.4V5.6H10.4V6.6H13.1L16.9 9.6V17.2L14.9 20.2V26.8H5V20.2L3 16.6L.2 13V9.3L2.6 8.9L4 10.6Z" fill="#fff" stroke="#000" stroke-width="1.1" stroke-linejoin="round"/>
<path d="M7.6 5.6V11M10.4 6.6V11M13.1 7.6V11.5M4 10.6V13.5" stroke="#000" stroke-width="1" fill="none"/>
<rect x="5" y="21.3" width="9.9" height="5.3" fill="#fbc12e" stroke="#000" stroke-width="1.1"/><rect x="11.3" y="22.7" width="2" height="2" fill="#000"/>
</svg><svg class="abs" style="left:1861px;top:53px;width:20px;height:30px;overflow:visible" viewBox="-1 -1 20 30">
<path d="M4 1.4Q5.8-.4 7.6 1.4V5.6H10.4V6.6H13.1L16.9 9.6V17.2L14.9 20.2V26.8H5V20.2L3 16.6L.2 13V9.3L2.6 8.9L4 10.6Z" fill="#fff" stroke="#fff" stroke-width="2.6" stroke-linejoin="round"/>
<path d="M4 1.4Q5.8-.4 7.6 1.4V5.6H10.4V6.6H13.1L16.9 9.6V17.2L14.9 20.2V26.8H5V20.2L3 16.6L.2 13V9.3L2.6 8.9L4 10.6Z" fill="#fff" stroke="#000" stroke-width="1.1" stroke-linejoin="round"/>
<path d="M7.6 5.6V11M10.4 6.6V11M13.1 7.6V11.5M4 10.6V13.5" stroke="#000" stroke-width="1" fill="none"/>
<rect x="5" y="21.3" width="9.9" height="5.3" fill="#fbc12e" stroke="#000" stroke-width="1.1"/><rect x="11.3" y="22.7" width="2" height="2" fill="#000"/>
</svg></div>
</body></html>
